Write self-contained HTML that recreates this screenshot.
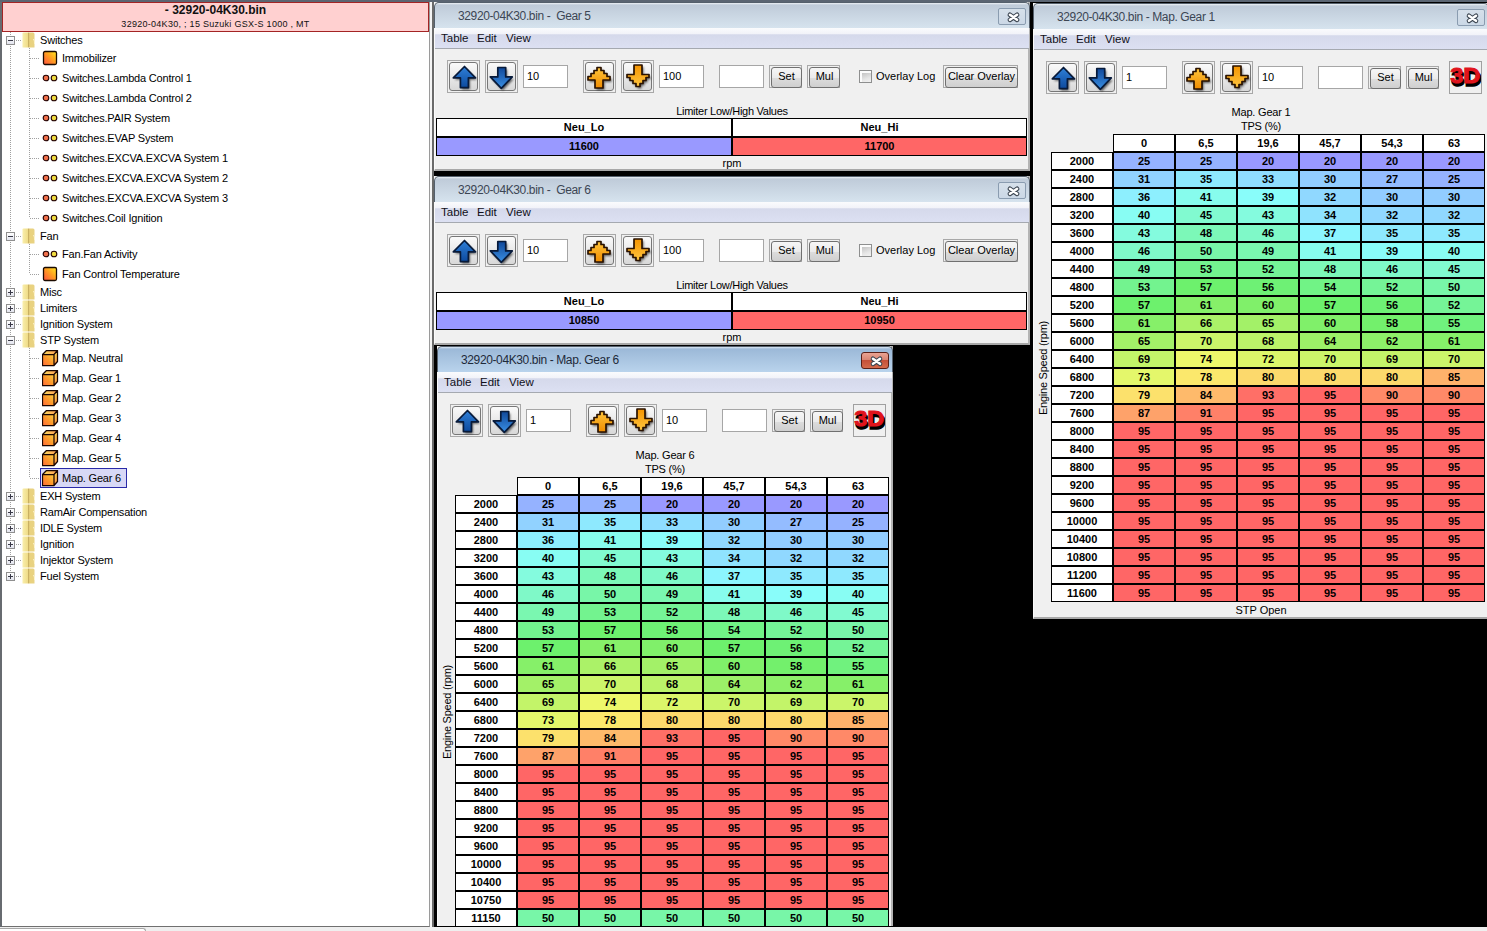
<!DOCTYPE html>
<html><head><meta charset="utf-8"><style>
html,body{margin:0;padding:0}
body{width:1487px;height:931px;position:relative;overflow:hidden;background:#000;font-family:"Liberation Sans", sans-serif;font-size:11px;color:#000}
div{position:absolute}
.t{white-space:nowrap}
#tree .t{letter-spacing:-0.19px;color:#000}
</style></head><body>
<div style="left:0;top:0;width:1487px;height:2px;background:#5b6572"></div>
<div style="left:0;top:2px;width:2px;height:925px;background:#676b70"></div>
<div style="left:2px;top:2px;width:427px;height:924px;background:#fff;border-right:1px solid #9a9a9a;border-bottom:1px solid #707070"></div>
<div style="left:430px;top:2px;width:2px;height:925px;background:#f4f4f4"></div>
<div style="left:432px;top:2px;width:2px;height:925px;background:#6a6a6a"></div>
<div style="left:0;top:927px;width:1487px;height:4px;background:#efefef"></div>
<div style="left:0;top:928px;width:145px;height:3px;background:#fff;border-top:1px solid #a8a8a8;border-right:1px solid #a8a8a8;border-radius:0 3px 0 0"></div>
<div style="left:2px;top:2px;width:427px;height:30px;box-sizing:border-box;border:1px solid #a32424;background:#ffd0d0"></div>
<div class="t" style="left:2px;top:4px;width:427px;text-align:center;font-weight:bold;font-size:12px;line-height:13px;color:#111">- 32920-04K30.bin</div>
<div class="t" style="left:2px;top:18px;width:427px;text-align:center;font-size:9px;letter-spacing:0.28px;line-height:12px;color:#111">32920-04K30, ; 15 Suzuki GSX-S 1000 , MT</div>
<div id="tree" style="left:0;top:0;width:430px;height:931px"><div style="left:10px;top:32px;width:1px;height:544px;background:repeating-linear-gradient(#a0a0a0 0 1px,transparent 1px 2px)"></div><div style="left:29px;top:48px;width:1px;height:170px;background:repeating-linear-gradient(#a0a0a0 0 1px,transparent 1px 2px)"></div><div style="left:29px;top:244px;width:1px;height:30px;background:repeating-linear-gradient(#a0a0a0 0 1px,transparent 1px 2px)"></div><div style="left:29px;top:348px;width:1px;height:130px;background:repeating-linear-gradient(#a0a0a0 0 1px,transparent 1px 2px)"></div><div style="left:16px;top:40px;width:6px;height:1px;background:repeating-linear-gradient(90deg,#a0a0a0 0 1px,transparent 1px 2px)"></div><div style="left:6px;top:36px;width:9px;height:9px;box-sizing:border-box;border:1px solid #8f8f8f;background:linear-gradient(#fff,#e2e4ee)"><div style="left:1px;top:3px;width:5px;height:1px;background:#3a3a48"></div></div><div style="left:22px;top:32px;width:14px;height:16px;"><svg width="14" height="16" viewBox="0 0 14 16"><defs><linearGradient id="fg" x1="0" y1="0" x2="1" y2="0"><stop offset="0" stop-color="#f9eeac"/><stop offset=".45" stop-color="#efdc88"/><stop offset=".5" stop-color="#c9b062"/><stop offset=".6" stop-color="#ead27e"/><stop offset="1" stop-color="#e8d283"/></linearGradient></defs><path d="M0.5 1.5 Q0.5 0.5 1.5 0.5 H11 Q12.5 0.5 12.5 2 V15.5 H0.5 Z" fill="url(#fg)"/><path d="M11.5 7 Q12.8 8.5 12.5 12" stroke="#fff6d0" stroke-width="1" fill="none"/></svg></div><div class="t" style="left:40px;top:32px;line-height:16px">Switches</div><div style="left:30px;top:58px;width:10px;height:1px;background:repeating-linear-gradient(90deg,#a0a0a0 0 1px,transparent 1px 2px)"></div><div style="left:42px;top:50px;width:17px;height:17px;"><svg width="16" height="16" viewBox="0 0 16 16"><defs><linearGradient id="sq" x1="0" y1="1" x2="1" y2="0"><stop offset="0" stop-color="#ff5040"/><stop offset=".55" stop-color="#ffa020"/><stop offset="1" stop-color="#ffe820"/></linearGradient></defs><rect x="1.5" y="1.5" width="13" height="13" rx="1.5" fill="url(#sq)" stroke="#1a0a00" stroke-width="1.3"/></svg></div><div class="t" style="left:62px;top:48px;line-height:20px">Immobilizer</div><div style="left:30px;top:78px;width:10px;height:1px;background:repeating-linear-gradient(90deg,#a0a0a0 0 1px,transparent 1px 2px)"></div><div style="left:42px;top:70px;width:17px;height:17px;"><svg width="16" height="16" viewBox="0 0 16 16"><circle cx="4" cy="8" r="2.8" fill="#f0704a" stroke="#200" stroke-width="1.1"/><circle cx="12" cy="8" r="2.8" fill="#f0dc40" stroke="#200" stroke-width="1.1"/></svg></div><div class="t" style="left:62px;top:68px;line-height:20px">Switches.Lambda Control 1</div><div style="left:30px;top:98px;width:10px;height:1px;background:repeating-linear-gradient(90deg,#a0a0a0 0 1px,transparent 1px 2px)"></div><div style="left:42px;top:90px;width:17px;height:17px;"><svg width="16" height="16" viewBox="0 0 16 16"><circle cx="4" cy="8" r="2.8" fill="#f0704a" stroke="#200" stroke-width="1.1"/><circle cx="12" cy="8" r="2.8" fill="#f0dc40" stroke="#200" stroke-width="1.1"/></svg></div><div class="t" style="left:62px;top:88px;line-height:20px">Switches.Lambda Control 2</div><div style="left:30px;top:118px;width:10px;height:1px;background:repeating-linear-gradient(90deg,#a0a0a0 0 1px,transparent 1px 2px)"></div><div style="left:42px;top:110px;width:17px;height:17px;"><svg width="16" height="16" viewBox="0 0 16 16"><circle cx="4" cy="8" r="2.8" fill="#f0704a" stroke="#200" stroke-width="1.1"/><circle cx="12" cy="8" r="2.8" fill="#f0dc40" stroke="#200" stroke-width="1.1"/></svg></div><div class="t" style="left:62px;top:108px;line-height:20px">Switches.PAIR System</div><div style="left:30px;top:138px;width:10px;height:1px;background:repeating-linear-gradient(90deg,#a0a0a0 0 1px,transparent 1px 2px)"></div><div style="left:42px;top:130px;width:17px;height:17px;"><svg width="16" height="16" viewBox="0 0 16 16"><circle cx="4" cy="8" r="2.8" fill="#f0704a" stroke="#200" stroke-width="1.1"/><circle cx="12" cy="8" r="2.8" fill="#f0dc40" stroke="#200" stroke-width="1.1"/></svg></div><div class="t" style="left:62px;top:128px;line-height:20px">Switches.EVAP System</div><div style="left:30px;top:158px;width:10px;height:1px;background:repeating-linear-gradient(90deg,#a0a0a0 0 1px,transparent 1px 2px)"></div><div style="left:42px;top:150px;width:17px;height:17px;"><svg width="16" height="16" viewBox="0 0 16 16"><circle cx="4" cy="8" r="2.8" fill="#f0704a" stroke="#200" stroke-width="1.1"/><circle cx="12" cy="8" r="2.8" fill="#f0dc40" stroke="#200" stroke-width="1.1"/></svg></div><div class="t" style="left:62px;top:148px;line-height:20px">Switches.EXCVA.EXCVA System 1</div><div style="left:30px;top:178px;width:10px;height:1px;background:repeating-linear-gradient(90deg,#a0a0a0 0 1px,transparent 1px 2px)"></div><div style="left:42px;top:170px;width:17px;height:17px;"><svg width="16" height="16" viewBox="0 0 16 16"><circle cx="4" cy="8" r="2.8" fill="#f0704a" stroke="#200" stroke-width="1.1"/><circle cx="12" cy="8" r="2.8" fill="#f0dc40" stroke="#200" stroke-width="1.1"/></svg></div><div class="t" style="left:62px;top:168px;line-height:20px">Switches.EXCVA.EXCVA System 2</div><div style="left:30px;top:198px;width:10px;height:1px;background:repeating-linear-gradient(90deg,#a0a0a0 0 1px,transparent 1px 2px)"></div><div style="left:42px;top:190px;width:17px;height:17px;"><svg width="16" height="16" viewBox="0 0 16 16"><circle cx="4" cy="8" r="2.8" fill="#f0704a" stroke="#200" stroke-width="1.1"/><circle cx="12" cy="8" r="2.8" fill="#f0dc40" stroke="#200" stroke-width="1.1"/></svg></div><div class="t" style="left:62px;top:188px;line-height:20px">Switches.EXCVA.EXCVA System 3</div><div style="left:30px;top:218px;width:10px;height:1px;background:repeating-linear-gradient(90deg,#a0a0a0 0 1px,transparent 1px 2px)"></div><div style="left:42px;top:210px;width:17px;height:17px;"><svg width="16" height="16" viewBox="0 0 16 16"><circle cx="4" cy="8" r="2.8" fill="#f0704a" stroke="#200" stroke-width="1.1"/><circle cx="12" cy="8" r="2.8" fill="#f0dc40" stroke="#200" stroke-width="1.1"/></svg></div><div class="t" style="left:62px;top:208px;line-height:20px">Switches.Coil Ignition</div><div style="left:16px;top:236px;width:6px;height:1px;background:repeating-linear-gradient(90deg,#a0a0a0 0 1px,transparent 1px 2px)"></div><div style="left:6px;top:232px;width:9px;height:9px;box-sizing:border-box;border:1px solid #8f8f8f;background:linear-gradient(#fff,#e2e4ee)"><div style="left:1px;top:3px;width:5px;height:1px;background:#3a3a48"></div></div><div style="left:22px;top:228px;width:14px;height:16px;"><svg width="14" height="16" viewBox="0 0 14 16"><defs><linearGradient id="fg" x1="0" y1="0" x2="1" y2="0"><stop offset="0" stop-color="#f9eeac"/><stop offset=".45" stop-color="#efdc88"/><stop offset=".5" stop-color="#c9b062"/><stop offset=".6" stop-color="#ead27e"/><stop offset="1" stop-color="#e8d283"/></linearGradient></defs><path d="M0.5 1.5 Q0.5 0.5 1.5 0.5 H11 Q12.5 0.5 12.5 2 V15.5 H0.5 Z" fill="url(#fg)"/><path d="M11.5 7 Q12.8 8.5 12.5 12" stroke="#fff6d0" stroke-width="1" fill="none"/></svg></div><div class="t" style="left:40px;top:228px;line-height:16px">Fan</div><div style="left:30px;top:254px;width:10px;height:1px;background:repeating-linear-gradient(90deg,#a0a0a0 0 1px,transparent 1px 2px)"></div><div style="left:42px;top:246px;width:17px;height:17px;"><svg width="16" height="16" viewBox="0 0 16 16"><circle cx="4" cy="8" r="2.8" fill="#f0704a" stroke="#200" stroke-width="1.1"/><circle cx="12" cy="8" r="2.8" fill="#f0dc40" stroke="#200" stroke-width="1.1"/></svg></div><div class="t" style="left:62px;top:244px;line-height:20px">Fan.Fan Activity</div><div style="left:30px;top:274px;width:10px;height:1px;background:repeating-linear-gradient(90deg,#a0a0a0 0 1px,transparent 1px 2px)"></div><div style="left:42px;top:266px;width:17px;height:17px;"><svg width="16" height="16" viewBox="0 0 16 16"><defs><linearGradient id="sq" x1="0" y1="1" x2="1" y2="0"><stop offset="0" stop-color="#ff5040"/><stop offset=".55" stop-color="#ffa020"/><stop offset="1" stop-color="#ffe820"/></linearGradient></defs><rect x="1.5" y="1.5" width="13" height="13" rx="1.5" fill="url(#sq)" stroke="#1a0a00" stroke-width="1.3"/></svg></div><div class="t" style="left:62px;top:264px;line-height:20px">Fan Control Temperature</div><div style="left:16px;top:292px;width:6px;height:1px;background:repeating-linear-gradient(90deg,#a0a0a0 0 1px,transparent 1px 2px)"></div><div style="left:6px;top:288px;width:9px;height:9px;box-sizing:border-box;border:1px solid #8f8f8f;background:linear-gradient(#fff,#e2e4ee)"><div style="left:1px;top:3px;width:5px;height:1px;background:#3a3a48"></div><div style="left:3px;top:1px;width:1px;height:5px;background:#3a3a48"></div></div><div style="left:22px;top:284px;width:14px;height:16px;"><svg width="14" height="16" viewBox="0 0 14 16"><defs><linearGradient id="fg" x1="0" y1="0" x2="1" y2="0"><stop offset="0" stop-color="#f9eeac"/><stop offset=".45" stop-color="#efdc88"/><stop offset=".5" stop-color="#c9b062"/><stop offset=".6" stop-color="#ead27e"/><stop offset="1" stop-color="#e8d283"/></linearGradient></defs><path d="M0.5 1.5 Q0.5 0.5 1.5 0.5 H11 Q12.5 0.5 12.5 2 V15.5 H0.5 Z" fill="url(#fg)"/><path d="M11.5 7 Q12.8 8.5 12.5 12" stroke="#fff6d0" stroke-width="1" fill="none"/></svg></div><div class="t" style="left:40px;top:284px;line-height:16px">Misc</div><div style="left:16px;top:308px;width:6px;height:1px;background:repeating-linear-gradient(90deg,#a0a0a0 0 1px,transparent 1px 2px)"></div><div style="left:6px;top:304px;width:9px;height:9px;box-sizing:border-box;border:1px solid #8f8f8f;background:linear-gradient(#fff,#e2e4ee)"><div style="left:1px;top:3px;width:5px;height:1px;background:#3a3a48"></div><div style="left:3px;top:1px;width:1px;height:5px;background:#3a3a48"></div></div><div style="left:22px;top:300px;width:14px;height:16px;"><svg width="14" height="16" viewBox="0 0 14 16"><defs><linearGradient id="fg" x1="0" y1="0" x2="1" y2="0"><stop offset="0" stop-color="#f9eeac"/><stop offset=".45" stop-color="#efdc88"/><stop offset=".5" stop-color="#c9b062"/><stop offset=".6" stop-color="#ead27e"/><stop offset="1" stop-color="#e8d283"/></linearGradient></defs><path d="M0.5 1.5 Q0.5 0.5 1.5 0.5 H11 Q12.5 0.5 12.5 2 V15.5 H0.5 Z" fill="url(#fg)"/><path d="M11.5 7 Q12.8 8.5 12.5 12" stroke="#fff6d0" stroke-width="1" fill="none"/></svg></div><div class="t" style="left:40px;top:300px;line-height:16px">Limiters</div><div style="left:16px;top:324px;width:6px;height:1px;background:repeating-linear-gradient(90deg,#a0a0a0 0 1px,transparent 1px 2px)"></div><div style="left:6px;top:320px;width:9px;height:9px;box-sizing:border-box;border:1px solid #8f8f8f;background:linear-gradient(#fff,#e2e4ee)"><div style="left:1px;top:3px;width:5px;height:1px;background:#3a3a48"></div><div style="left:3px;top:1px;width:1px;height:5px;background:#3a3a48"></div></div><div style="left:22px;top:316px;width:14px;height:16px;"><svg width="14" height="16" viewBox="0 0 14 16"><defs><linearGradient id="fg" x1="0" y1="0" x2="1" y2="0"><stop offset="0" stop-color="#f9eeac"/><stop offset=".45" stop-color="#efdc88"/><stop offset=".5" stop-color="#c9b062"/><stop offset=".6" stop-color="#ead27e"/><stop offset="1" stop-color="#e8d283"/></linearGradient></defs><path d="M0.5 1.5 Q0.5 0.5 1.5 0.5 H11 Q12.5 0.5 12.5 2 V15.5 H0.5 Z" fill="url(#fg)"/><path d="M11.5 7 Q12.8 8.5 12.5 12" stroke="#fff6d0" stroke-width="1" fill="none"/></svg></div><div class="t" style="left:40px;top:316px;line-height:16px">Ignition System</div><div style="left:16px;top:340px;width:6px;height:1px;background:repeating-linear-gradient(90deg,#a0a0a0 0 1px,transparent 1px 2px)"></div><div style="left:6px;top:336px;width:9px;height:9px;box-sizing:border-box;border:1px solid #8f8f8f;background:linear-gradient(#fff,#e2e4ee)"><div style="left:1px;top:3px;width:5px;height:1px;background:#3a3a48"></div></div><div style="left:22px;top:332px;width:14px;height:16px;"><svg width="14" height="16" viewBox="0 0 14 16"><defs><linearGradient id="fg" x1="0" y1="0" x2="1" y2="0"><stop offset="0" stop-color="#f9eeac"/><stop offset=".45" stop-color="#efdc88"/><stop offset=".5" stop-color="#c9b062"/><stop offset=".6" stop-color="#ead27e"/><stop offset="1" stop-color="#e8d283"/></linearGradient></defs><path d="M0.5 1.5 Q0.5 0.5 1.5 0.5 H11 Q12.5 0.5 12.5 2 V15.5 H0.5 Z" fill="url(#fg)"/><path d="M11.5 7 Q12.8 8.5 12.5 12" stroke="#fff6d0" stroke-width="1" fill="none"/></svg></div><div class="t" style="left:40px;top:332px;line-height:16px">STP System</div><div style="left:30px;top:358px;width:10px;height:1px;background:repeating-linear-gradient(90deg,#a0a0a0 0 1px,transparent 1px 2px)"></div><div style="left:42px;top:350px;width:17px;height:17px;"><svg width="17" height="17" viewBox="0 0 17 17"><defs><linearGradient id="cf" x1="0" y1="1" x2="1" y2="0"><stop offset="0" stop-color="#ff6a3a"/><stop offset=".5" stop-color="#ff9a2a"/><stop offset="1" stop-color="#ffd040"/></linearGradient><linearGradient id="ct" x1="0" y1="0" x2="1" y2="0"><stop offset="0" stop-color="#ffe060"/><stop offset="1" stop-color="#ff9a50"/></linearGradient><linearGradient id="cr" x1="0" y1="0" x2="0" y2="1"><stop offset="0" stop-color="#ffe050"/><stop offset="1" stop-color="#ff8a40"/></linearGradient></defs><path d="M0.5 4.5 L4.5 0.5 H15.5 L12 4.5 Z" fill="url(#ct)"/><path d="M12 4.5 L15.5 0.5 V11.5 L12 15.5 Z" fill="url(#cr)"/><path d="M0.5 4.5 H12 V15.5 H0.5 Z" fill="url(#cf)"/><path d="M0.5 4.5 L4.5 0.5 H15.5 V11.5 L12 15.5 H0.5 Z M0.5 4.5 H12 V15.5 M12 4.5 L15.5 0.5" fill="none" stroke="#1a0500" stroke-width="1.25" stroke-linejoin="round"/></svg></div><div class="t" style="left:62px;top:348px;line-height:20px">Map. Neutral</div><div style="left:30px;top:378px;width:10px;height:1px;background:repeating-linear-gradient(90deg,#a0a0a0 0 1px,transparent 1px 2px)"></div><div style="left:42px;top:370px;width:17px;height:17px;"><svg width="17" height="17" viewBox="0 0 17 17"><defs><linearGradient id="cf" x1="0" y1="1" x2="1" y2="0"><stop offset="0" stop-color="#ff6a3a"/><stop offset=".5" stop-color="#ff9a2a"/><stop offset="1" stop-color="#ffd040"/></linearGradient><linearGradient id="ct" x1="0" y1="0" x2="1" y2="0"><stop offset="0" stop-color="#ffe060"/><stop offset="1" stop-color="#ff9a50"/></linearGradient><linearGradient id="cr" x1="0" y1="0" x2="0" y2="1"><stop offset="0" stop-color="#ffe050"/><stop offset="1" stop-color="#ff8a40"/></linearGradient></defs><path d="M0.5 4.5 L4.5 0.5 H15.5 L12 4.5 Z" fill="url(#ct)"/><path d="M12 4.5 L15.5 0.5 V11.5 L12 15.5 Z" fill="url(#cr)"/><path d="M0.5 4.5 H12 V15.5 H0.5 Z" fill="url(#cf)"/><path d="M0.5 4.5 L4.5 0.5 H15.5 V11.5 L12 15.5 H0.5 Z M0.5 4.5 H12 V15.5 M12 4.5 L15.5 0.5" fill="none" stroke="#1a0500" stroke-width="1.25" stroke-linejoin="round"/></svg></div><div class="t" style="left:62px;top:368px;line-height:20px">Map. Gear 1</div><div style="left:30px;top:398px;width:10px;height:1px;background:repeating-linear-gradient(90deg,#a0a0a0 0 1px,transparent 1px 2px)"></div><div style="left:42px;top:390px;width:17px;height:17px;"><svg width="17" height="17" viewBox="0 0 17 17"><defs><linearGradient id="cf" x1="0" y1="1" x2="1" y2="0"><stop offset="0" stop-color="#ff6a3a"/><stop offset=".5" stop-color="#ff9a2a"/><stop offset="1" stop-color="#ffd040"/></linearGradient><linearGradient id="ct" x1="0" y1="0" x2="1" y2="0"><stop offset="0" stop-color="#ffe060"/><stop offset="1" stop-color="#ff9a50"/></linearGradient><linearGradient id="cr" x1="0" y1="0" x2="0" y2="1"><stop offset="0" stop-color="#ffe050"/><stop offset="1" stop-color="#ff8a40"/></linearGradient></defs><path d="M0.5 4.5 L4.5 0.5 H15.5 L12 4.5 Z" fill="url(#ct)"/><path d="M12 4.5 L15.5 0.5 V11.5 L12 15.5 Z" fill="url(#cr)"/><path d="M0.5 4.5 H12 V15.5 H0.5 Z" fill="url(#cf)"/><path d="M0.5 4.5 L4.5 0.5 H15.5 V11.5 L12 15.5 H0.5 Z M0.5 4.5 H12 V15.5 M12 4.5 L15.5 0.5" fill="none" stroke="#1a0500" stroke-width="1.25" stroke-linejoin="round"/></svg></div><div class="t" style="left:62px;top:388px;line-height:20px">Map. Gear 2</div><div style="left:30px;top:418px;width:10px;height:1px;background:repeating-linear-gradient(90deg,#a0a0a0 0 1px,transparent 1px 2px)"></div><div style="left:42px;top:410px;width:17px;height:17px;"><svg width="17" height="17" viewBox="0 0 17 17"><defs><linearGradient id="cf" x1="0" y1="1" x2="1" y2="0"><stop offset="0" stop-color="#ff6a3a"/><stop offset=".5" stop-color="#ff9a2a"/><stop offset="1" stop-color="#ffd040"/></linearGradient><linearGradient id="ct" x1="0" y1="0" x2="1" y2="0"><stop offset="0" stop-color="#ffe060"/><stop offset="1" stop-color="#ff9a50"/></linearGradient><linearGradient id="cr" x1="0" y1="0" x2="0" y2="1"><stop offset="0" stop-color="#ffe050"/><stop offset="1" stop-color="#ff8a40"/></linearGradient></defs><path d="M0.5 4.5 L4.5 0.5 H15.5 L12 4.5 Z" fill="url(#ct)"/><path d="M12 4.5 L15.5 0.5 V11.5 L12 15.5 Z" fill="url(#cr)"/><path d="M0.5 4.5 H12 V15.5 H0.5 Z" fill="url(#cf)"/><path d="M0.5 4.5 L4.5 0.5 H15.5 V11.5 L12 15.5 H0.5 Z M0.5 4.5 H12 V15.5 M12 4.5 L15.5 0.5" fill="none" stroke="#1a0500" stroke-width="1.25" stroke-linejoin="round"/></svg></div><div class="t" style="left:62px;top:408px;line-height:20px">Map. Gear 3</div><div style="left:30px;top:438px;width:10px;height:1px;background:repeating-linear-gradient(90deg,#a0a0a0 0 1px,transparent 1px 2px)"></div><div style="left:42px;top:430px;width:17px;height:17px;"><svg width="17" height="17" viewBox="0 0 17 17"><defs><linearGradient id="cf" x1="0" y1="1" x2="1" y2="0"><stop offset="0" stop-color="#ff6a3a"/><stop offset=".5" stop-color="#ff9a2a"/><stop offset="1" stop-color="#ffd040"/></linearGradient><linearGradient id="ct" x1="0" y1="0" x2="1" y2="0"><stop offset="0" stop-color="#ffe060"/><stop offset="1" stop-color="#ff9a50"/></linearGradient><linearGradient id="cr" x1="0" y1="0" x2="0" y2="1"><stop offset="0" stop-color="#ffe050"/><stop offset="1" stop-color="#ff8a40"/></linearGradient></defs><path d="M0.5 4.5 L4.5 0.5 H15.5 L12 4.5 Z" fill="url(#ct)"/><path d="M12 4.5 L15.5 0.5 V11.5 L12 15.5 Z" fill="url(#cr)"/><path d="M0.5 4.5 H12 V15.5 H0.5 Z" fill="url(#cf)"/><path d="M0.5 4.5 L4.5 0.5 H15.5 V11.5 L12 15.5 H0.5 Z M0.5 4.5 H12 V15.5 M12 4.5 L15.5 0.5" fill="none" stroke="#1a0500" stroke-width="1.25" stroke-linejoin="round"/></svg></div><div class="t" style="left:62px;top:428px;line-height:20px">Map. Gear 4</div><div style="left:30px;top:458px;width:10px;height:1px;background:repeating-linear-gradient(90deg,#a0a0a0 0 1px,transparent 1px 2px)"></div><div style="left:42px;top:450px;width:17px;height:17px;"><svg width="17" height="17" viewBox="0 0 17 17"><defs><linearGradient id="cf" x1="0" y1="1" x2="1" y2="0"><stop offset="0" stop-color="#ff6a3a"/><stop offset=".5" stop-color="#ff9a2a"/><stop offset="1" stop-color="#ffd040"/></linearGradient><linearGradient id="ct" x1="0" y1="0" x2="1" y2="0"><stop offset="0" stop-color="#ffe060"/><stop offset="1" stop-color="#ff9a50"/></linearGradient><linearGradient id="cr" x1="0" y1="0" x2="0" y2="1"><stop offset="0" stop-color="#ffe050"/><stop offset="1" stop-color="#ff8a40"/></linearGradient></defs><path d="M0.5 4.5 L4.5 0.5 H15.5 L12 4.5 Z" fill="url(#ct)"/><path d="M12 4.5 L15.5 0.5 V11.5 L12 15.5 Z" fill="url(#cr)"/><path d="M0.5 4.5 H12 V15.5 H0.5 Z" fill="url(#cf)"/><path d="M0.5 4.5 L4.5 0.5 H15.5 V11.5 L12 15.5 H0.5 Z M0.5 4.5 H12 V15.5 M12 4.5 L15.5 0.5" fill="none" stroke="#1a0500" stroke-width="1.25" stroke-linejoin="round"/></svg></div><div class="t" style="left:62px;top:448px;line-height:20px">Map. Gear 5</div><div style="left:30px;top:478px;width:10px;height:1px;background:repeating-linear-gradient(90deg,#a0a0a0 0 1px,transparent 1px 2px)"></div><div style="left:40px;top:468px;width:87px;height:20px;box-sizing:border-box;border:1px solid #2a2aa8;background:#d8d8f6"></div><div style="left:42px;top:470px;width:17px;height:17px;"><svg width="17" height="17" viewBox="0 0 17 17"><defs><linearGradient id="cf" x1="0" y1="1" x2="1" y2="0"><stop offset="0" stop-color="#ff6a3a"/><stop offset=".5" stop-color="#ff9a2a"/><stop offset="1" stop-color="#ffd040"/></linearGradient><linearGradient id="ct" x1="0" y1="0" x2="1" y2="0"><stop offset="0" stop-color="#ffe060"/><stop offset="1" stop-color="#ff9a50"/></linearGradient><linearGradient id="cr" x1="0" y1="0" x2="0" y2="1"><stop offset="0" stop-color="#ffe050"/><stop offset="1" stop-color="#ff8a40"/></linearGradient></defs><path d="M0.5 4.5 L4.5 0.5 H15.5 L12 4.5 Z" fill="url(#ct)"/><path d="M12 4.5 L15.5 0.5 V11.5 L12 15.5 Z" fill="url(#cr)"/><path d="M0.5 4.5 H12 V15.5 H0.5 Z" fill="url(#cf)"/><path d="M0.5 4.5 L4.5 0.5 H15.5 V11.5 L12 15.5 H0.5 Z M0.5 4.5 H12 V15.5 M12 4.5 L15.5 0.5" fill="none" stroke="#1a0500" stroke-width="1.25" stroke-linejoin="round"/></svg></div><div class="t" style="left:62px;top:468px;line-height:20px">Map. Gear 6</div><div style="left:16px;top:496px;width:6px;height:1px;background:repeating-linear-gradient(90deg,#a0a0a0 0 1px,transparent 1px 2px)"></div><div style="left:6px;top:492px;width:9px;height:9px;box-sizing:border-box;border:1px solid #8f8f8f;background:linear-gradient(#fff,#e2e4ee)"><div style="left:1px;top:3px;width:5px;height:1px;background:#3a3a48"></div><div style="left:3px;top:1px;width:1px;height:5px;background:#3a3a48"></div></div><div style="left:22px;top:488px;width:14px;height:16px;"><svg width="14" height="16" viewBox="0 0 14 16"><defs><linearGradient id="fg" x1="0" y1="0" x2="1" y2="0"><stop offset="0" stop-color="#f9eeac"/><stop offset=".45" stop-color="#efdc88"/><stop offset=".5" stop-color="#c9b062"/><stop offset=".6" stop-color="#ead27e"/><stop offset="1" stop-color="#e8d283"/></linearGradient></defs><path d="M0.5 1.5 Q0.5 0.5 1.5 0.5 H11 Q12.5 0.5 12.5 2 V15.5 H0.5 Z" fill="url(#fg)"/><path d="M11.5 7 Q12.8 8.5 12.5 12" stroke="#fff6d0" stroke-width="1" fill="none"/></svg></div><div class="t" style="left:40px;top:488px;line-height:16px">EXH System</div><div style="left:16px;top:512px;width:6px;height:1px;background:repeating-linear-gradient(90deg,#a0a0a0 0 1px,transparent 1px 2px)"></div><div style="left:6px;top:508px;width:9px;height:9px;box-sizing:border-box;border:1px solid #8f8f8f;background:linear-gradient(#fff,#e2e4ee)"><div style="left:1px;top:3px;width:5px;height:1px;background:#3a3a48"></div><div style="left:3px;top:1px;width:1px;height:5px;background:#3a3a48"></div></div><div style="left:22px;top:504px;width:14px;height:16px;"><svg width="14" height="16" viewBox="0 0 14 16"><defs><linearGradient id="fg" x1="0" y1="0" x2="1" y2="0"><stop offset="0" stop-color="#f9eeac"/><stop offset=".45" stop-color="#efdc88"/><stop offset=".5" stop-color="#c9b062"/><stop offset=".6" stop-color="#ead27e"/><stop offset="1" stop-color="#e8d283"/></linearGradient></defs><path d="M0.5 1.5 Q0.5 0.5 1.5 0.5 H11 Q12.5 0.5 12.5 2 V15.5 H0.5 Z" fill="url(#fg)"/><path d="M11.5 7 Q12.8 8.5 12.5 12" stroke="#fff6d0" stroke-width="1" fill="none"/></svg></div><div class="t" style="left:40px;top:504px;line-height:16px">RamAir Compensation</div><div style="left:16px;top:528px;width:6px;height:1px;background:repeating-linear-gradient(90deg,#a0a0a0 0 1px,transparent 1px 2px)"></div><div style="left:6px;top:524px;width:9px;height:9px;box-sizing:border-box;border:1px solid #8f8f8f;background:linear-gradient(#fff,#e2e4ee)"><div style="left:1px;top:3px;width:5px;height:1px;background:#3a3a48"></div><div style="left:3px;top:1px;width:1px;height:5px;background:#3a3a48"></div></div><div style="left:22px;top:520px;width:14px;height:16px;"><svg width="14" height="16" viewBox="0 0 14 16"><defs><linearGradient id="fg" x1="0" y1="0" x2="1" y2="0"><stop offset="0" stop-color="#f9eeac"/><stop offset=".45" stop-color="#efdc88"/><stop offset=".5" stop-color="#c9b062"/><stop offset=".6" stop-color="#ead27e"/><stop offset="1" stop-color="#e8d283"/></linearGradient></defs><path d="M0.5 1.5 Q0.5 0.5 1.5 0.5 H11 Q12.5 0.5 12.5 2 V15.5 H0.5 Z" fill="url(#fg)"/><path d="M11.5 7 Q12.8 8.5 12.5 12" stroke="#fff6d0" stroke-width="1" fill="none"/></svg></div><div class="t" style="left:40px;top:520px;line-height:16px">IDLE System</div><div style="left:16px;top:544px;width:6px;height:1px;background:repeating-linear-gradient(90deg,#a0a0a0 0 1px,transparent 1px 2px)"></div><div style="left:6px;top:540px;width:9px;height:9px;box-sizing:border-box;border:1px solid #8f8f8f;background:linear-gradient(#fff,#e2e4ee)"><div style="left:1px;top:3px;width:5px;height:1px;background:#3a3a48"></div><div style="left:3px;top:1px;width:1px;height:5px;background:#3a3a48"></div></div><div style="left:22px;top:536px;width:14px;height:16px;"><svg width="14" height="16" viewBox="0 0 14 16"><defs><linearGradient id="fg" x1="0" y1="0" x2="1" y2="0"><stop offset="0" stop-color="#f9eeac"/><stop offset=".45" stop-color="#efdc88"/><stop offset=".5" stop-color="#c9b062"/><stop offset=".6" stop-color="#ead27e"/><stop offset="1" stop-color="#e8d283"/></linearGradient></defs><path d="M0.5 1.5 Q0.5 0.5 1.5 0.5 H11 Q12.5 0.5 12.5 2 V15.5 H0.5 Z" fill="url(#fg)"/><path d="M11.5 7 Q12.8 8.5 12.5 12" stroke="#fff6d0" stroke-width="1" fill="none"/></svg></div><div class="t" style="left:40px;top:536px;line-height:16px">Ignition</div><div style="left:16px;top:560px;width:6px;height:1px;background:repeating-linear-gradient(90deg,#a0a0a0 0 1px,transparent 1px 2px)"></div><div style="left:6px;top:556px;width:9px;height:9px;box-sizing:border-box;border:1px solid #8f8f8f;background:linear-gradient(#fff,#e2e4ee)"><div style="left:1px;top:3px;width:5px;height:1px;background:#3a3a48"></div><div style="left:3px;top:1px;width:1px;height:5px;background:#3a3a48"></div></div><div style="left:22px;top:552px;width:14px;height:16px;"><svg width="14" height="16" viewBox="0 0 14 16"><defs><linearGradient id="fg" x1="0" y1="0" x2="1" y2="0"><stop offset="0" stop-color="#f9eeac"/><stop offset=".45" stop-color="#efdc88"/><stop offset=".5" stop-color="#c9b062"/><stop offset=".6" stop-color="#ead27e"/><stop offset="1" stop-color="#e8d283"/></linearGradient></defs><path d="M0.5 1.5 Q0.5 0.5 1.5 0.5 H11 Q12.5 0.5 12.5 2 V15.5 H0.5 Z" fill="url(#fg)"/><path d="M11.5 7 Q12.8 8.5 12.5 12" stroke="#fff6d0" stroke-width="1" fill="none"/></svg></div><div class="t" style="left:40px;top:552px;line-height:16px">Injektor System</div><div style="left:16px;top:576px;width:6px;height:1px;background:repeating-linear-gradient(90deg,#a0a0a0 0 1px,transparent 1px 2px)"></div><div style="left:6px;top:572px;width:9px;height:9px;box-sizing:border-box;border:1px solid #8f8f8f;background:linear-gradient(#fff,#e2e4ee)"><div style="left:1px;top:3px;width:5px;height:1px;background:#3a3a48"></div><div style="left:3px;top:1px;width:1px;height:5px;background:#3a3a48"></div></div><div style="left:22px;top:568px;width:14px;height:16px;"><svg width="14" height="16" viewBox="0 0 14 16"><defs><linearGradient id="fg" x1="0" y1="0" x2="1" y2="0"><stop offset="0" stop-color="#f9eeac"/><stop offset=".45" stop-color="#efdc88"/><stop offset=".5" stop-color="#c9b062"/><stop offset=".6" stop-color="#ead27e"/><stop offset="1" stop-color="#e8d283"/></linearGradient></defs><path d="M0.5 1.5 Q0.5 0.5 1.5 0.5 H11 Q12.5 0.5 12.5 2 V15.5 H0.5 Z" fill="url(#fg)"/><path d="M11.5 7 Q12.8 8.5 12.5 12" stroke="#fff6d0" stroke-width="1" fill="none"/></svg></div><div class="t" style="left:40px;top:568px;line-height:16px">Fuel System</div></div>
<div style="left:434px;top:2px;width:596px;height:169px;background:#f0f0f0;overflow:hidden;box-sizing:border-box;border-left:1px solid #fafafa;border-right:2px solid #b4b4b4;border-bottom:2px solid #a8a8a8"></div><div style="left:434px;top:2px;width:596px;height:26px;background:linear-gradient(#eef2f6 0,#bfcbd9 8%,#d6e3ee 100%);border-radius:5px 5px 0 0;box-sizing:border-box;border:1px solid #55606c;border-bottom:none"></div><div class="t" style="left:458px;top:9px;font-size:12px;color:#3c4654;white-space:pre;letter-spacing:-0.38px;line-height:15px">32920-04K30.bin -  Gear 5</div><div style="left:998px;top:8px;width:28px;height:17px;box-sizing:border-box;border:1px solid #8a9cb0;border-radius:2px;background:linear-gradient(#d6e0ea,#cbd8e6)"><svg width="28" height="17" viewBox="0 0 28 17" style="position:absolute;left:-1px;top:-1px"><path d="M12 6.8 L19 11.8 M19 6.8 L12 11.8" stroke="#3a4450" stroke-width="4.6" stroke-linecap="round"/><path d="M12 6.8 L19 11.8 M19 6.8 L12 11.8" stroke="#fff" stroke-width="2.6" stroke-linecap="round"/></svg></div><div style="left:435px;top:28px;width:594px;height:20px;background:linear-gradient(#fafbfd 0,#f2f3f9 28%,#d5d9eb 34%,#dce0f2 100%);border-bottom:1px solid #a5a9b0"></div><div class="t" style="left:441px;top:31px;font-size:11.5px;line-height:15px;color:#10101a">Table</div><div class="t" style="left:477px;top:31px;font-size:11.5px;line-height:15px;color:#10101a">Edit</div><div class="t" style="left:506px;top:31px;font-size:11.5px;line-height:15px;color:#10101a">View</div><div style="left:447px;top:60px;width:33px;height:33px;box-sizing:border-box;border:1px solid #a8a8a8"><div style="left:1px;top:1px;width:29px;height:29px;box-sizing:border-box;border:1px solid #777;border-radius:3px;background:linear-gradient(#fafafa,#e6e6e6 60%,#d8d8d8)"></div><svg width="33" height="33" viewBox="0 0 33 33" style="position:absolute;left:0;top:0"><defs><linearGradient id="gbu_447_60" x1="0" y1="0" x2="0" y2="1"><stop offset="0" stop-color="#2f80d8"/><stop offset="1" stop-color="#0d4a9e"/></linearGradient><filter id="fgbu_447_60" x="-20%" y="-20%" width="150%" height="150%"><feGaussianBlur stdDeviation="1.2"/></filter></defs><path d="M16.5 5.5 L27.5 16.8 H20.4 V26.6 H12.4 V16.8 H5.3 Z" fill="#000" opacity=".6" transform="translate(1.5,2)" filter="url(#fgbu_447_60)"/><path d="M16.5 5.5 L27.5 16.8 H20.4 V26.6 H12.4 V16.8 H5.3 Z" fill="url(#gbu_447_60)" stroke="#071a3a" stroke-width="1.7" stroke-linejoin="round"/></svg></div><div style="left:485px;top:60px;width:33px;height:33px;box-sizing:border-box;border:1px solid #a8a8a8"><div style="left:1px;top:1px;width:29px;height:29px;box-sizing:border-box;border:1px solid #777;border-radius:3px;background:linear-gradient(#fafafa,#e6e6e6 60%,#d8d8d8)"></div><svg width="33" height="33" viewBox="0 0 33 33" style="position:absolute;left:0;top:0"><defs><linearGradient id="gbd_485_60" x1="0" y1="0" x2="0" y2="1"><stop offset="0" stop-color="#10489a"/><stop offset="1" stop-color="#3a90e4"/></linearGradient><filter id="fgbd_485_60" x="-20%" y="-20%" width="150%" height="150%"><feGaussianBlur stdDeviation="1.2"/></filter></defs><path d="M11.8 6.5 H19.7 V15.9 H26.3 L15.3 27.4 L4.3 15.9 H11.8 Z" fill="#000" opacity=".6" transform="translate(1.5,2)" filter="url(#fgbd_485_60)"/><path d="M11.8 6.5 H19.7 V15.9 H26.3 L15.3 27.4 L4.3 15.9 H11.8 Z" fill="url(#gbd_485_60)" stroke="#071a3a" stroke-width="1.7" stroke-linejoin="round"/></svg></div><div style="left:523px;top:65px;width:45px;height:23px;box-sizing:border-box;border:1px solid #a6a6a6;background:#fff"><div class="t" style="left:3px;top:0;line-height:21px">10</div></div><div style="left:583px;top:60px;width:33px;height:33px;box-sizing:border-box;border:1px solid #a8a8a8"><div style="left:1px;top:1px;width:29px;height:29px;box-sizing:border-box;border:1px solid #777;border-radius:3px;background:linear-gradient(#fafafa,#e6e6e6 60%,#d8d8d8)"></div><svg width="33" height="33" viewBox="0 0 33 33" style="position:absolute;left:0;top:0"><defs><linearGradient id="gou_583_60" x1="0" y1="0" x2="0" y2="1"><stop offset="0" stop-color="#ffc43a"/><stop offset="1" stop-color="#f08c00"/></linearGradient><filter id="fgou_583_60" x="-20%" y="-20%" width="150%" height="150%"><feGaussianBlur stdDeviation="1.2"/></filter></defs><path d="M13 6.5h4v3h3v3h3v3h3v3.5h-7v8h-8v-8h-7v-3.5h3v-3h3v-3h3z" fill="#000" opacity=".6" transform="translate(1.5,2)" filter="url(#fgou_583_60)"/><path d="M13 6.5h4v3h3v3h3v3h3v3.5h-7v8h-8v-8h-7v-3.5h3v-3h3v-3h3z" fill="url(#gou_583_60)" stroke="#2a1200" stroke-width="1.7" stroke-linejoin="round"/></svg></div><div style="left:621px;top:60px;width:33px;height:33px;box-sizing:border-box;border:1px solid #a8a8a8"><div style="left:1px;top:1px;width:29px;height:29px;box-sizing:border-box;border:1px solid #777;border-radius:3px;background:linear-gradient(#fafafa,#e6e6e6 60%,#d8d8d8)"></div><svg width="33" height="33" viewBox="0 0 33 33" style="position:absolute;left:0;top:0"><defs><linearGradient id="god_621_60" x1="0" y1="0" x2="0" y2="1"><stop offset="0" stop-color="#f59400"/><stop offset="1" stop-color="#ffc640"/></linearGradient><filter id="fgod_621_60" x="-20%" y="-20%" width="150%" height="150%"><feGaussianBlur stdDeviation="1.2"/></filter></defs><path d="M12 4h8v9.5h7v3h-3v3h-3v3h-3v3h-4v-3h-3v-3h-3v-3h-3v-3h7z" fill="#000" opacity=".6" transform="translate(1.5,2)" filter="url(#fgod_621_60)"/><path d="M12 4h8v9.5h7v3h-3v3h-3v3h-3v3h-4v-3h-3v-3h-3v-3h-3v-3h7z" fill="url(#god_621_60)" stroke="#2a1200" stroke-width="1.7" stroke-linejoin="round"/></svg></div><div style="left:659px;top:65px;width:45px;height:23px;box-sizing:border-box;border:1px solid #a6a6a6;background:#fff"><div class="t" style="left:3px;top:0;line-height:21px">100</div></div><div style="left:719px;top:65px;width:45px;height:23px;box-sizing:border-box;border:1px solid #a6a6a6;background:#fff"><div class="t" style="left:3px;top:0;line-height:21px"></div></div><div style="left:769px;top:65px;width:33px;height:23px;box-sizing:border-box;border:1px solid #a8a8a8"><div style="left:1px;top:1px;width:31px;height:21px;box-sizing:border-box;border:1px solid #707070;border-radius:3px;background:linear-gradient(#f6f6f6 0,#ebebeb 50%,#dddddd 51%,#cfcfcf)"></div><div class="t" style="left:0;top:0;width:33px;text-align:center;line-height:21px">Set</div></div><div style="left:807px;top:65px;width:33px;height:23px;box-sizing:border-box;border:1px solid #a8a8a8"><div style="left:1px;top:1px;width:31px;height:21px;box-sizing:border-box;border:1px solid #707070;border-radius:3px;background:linear-gradient(#f6f6f6 0,#ebebeb 50%,#dddddd 51%,#cfcfcf)"></div><div class="t" style="left:0;top:0;width:33px;text-align:center;line-height:21px">Mul</div></div><div style="left:859px;top:70px;width:13px;height:13px;box-sizing:border-box;border:1px solid #8e8f8f;background:#fcfcfc"><div style="left:2px;top:2px;width:9px;height:9px;background:linear-gradient(160deg,#c4c4c4,#e6e6e6 60%,#f2f2f2)"></div></div><div class="t" style="left:876px;top:69px;line-height:15px">Overlay Log</div><div style="left:943px;top:65px;width:75px;height:23px;box-sizing:border-box;border:1px solid #a8a8a8"><div style="left:1px;top:1px;width:73px;height:21px;box-sizing:border-box;border:1px solid #707070;border-radius:3px;background:linear-gradient(#f6f6f6 0,#ebebeb 50%,#dddddd 51%,#cfcfcf)"></div><div class="t" style="left:0;top:0;width:75px;text-align:center;line-height:21px">Clear Overlay</div></div><div class="t" style="left:434px;top:104px;width:596px;text-align:center;letter-spacing:-0.27px;line-height:15px">Limiter Low/High Values</div><div style="left:436px;top:118px;width:296px;height:19px;box-sizing:border-box;border:1px solid #000;background:#fff;font-weight:bold;text-align:center;line-height:17px">Neu_Lo</div><div style="left:732px;top:118px;width:295px;height:19px;box-sizing:border-box;border:1px solid #000;background:#fff;font-weight:bold;text-align:center;line-height:17px">Neu_Hi</div><div style="left:436px;top:137px;width:296px;height:19px;box-sizing:border-box;border:1px solid #000;background:#9999ff;font-weight:bold;text-align:center;line-height:17px">11600</div><div style="left:732px;top:137px;width:295px;height:19px;box-sizing:border-box;border:1px solid #000;background:#ff6666;font-weight:bold;text-align:center;line-height:17px">11700</div><div class="t" style="left:434px;top:156px;width:596px;text-align:center;line-height:15px">rpm</div>
<div style="left:434px;top:176px;width:596px;height:169px;background:#f0f0f0;overflow:hidden;box-sizing:border-box;border-left:1px solid #fafafa;border-right:2px solid #b4b4b4;border-bottom:2px solid #a8a8a8"></div><div style="left:434px;top:176px;width:596px;height:26px;background:linear-gradient(#eef2f6 0,#bfcbd9 8%,#d6e3ee 100%);border-radius:5px 5px 0 0;box-sizing:border-box;border:1px solid #55606c;border-bottom:none"></div><div class="t" style="left:458px;top:183px;font-size:12px;color:#3c4654;white-space:pre;letter-spacing:-0.38px;line-height:15px">32920-04K30.bin -  Gear 6</div><div style="left:998px;top:182px;width:28px;height:17px;box-sizing:border-box;border:1px solid #8a9cb0;border-radius:2px;background:linear-gradient(#d6e0ea,#cbd8e6)"><svg width="28" height="17" viewBox="0 0 28 17" style="position:absolute;left:-1px;top:-1px"><path d="M12 6.8 L19 11.8 M19 6.8 L12 11.8" stroke="#3a4450" stroke-width="4.6" stroke-linecap="round"/><path d="M12 6.8 L19 11.8 M19 6.8 L12 11.8" stroke="#fff" stroke-width="2.6" stroke-linecap="round"/></svg></div><div style="left:435px;top:202px;width:594px;height:20px;background:linear-gradient(#fafbfd 0,#f2f3f9 28%,#d5d9eb 34%,#dce0f2 100%);border-bottom:1px solid #a5a9b0"></div><div class="t" style="left:441px;top:205px;font-size:11.5px;line-height:15px;color:#10101a">Table</div><div class="t" style="left:477px;top:205px;font-size:11.5px;line-height:15px;color:#10101a">Edit</div><div class="t" style="left:506px;top:205px;font-size:11.5px;line-height:15px;color:#10101a">View</div><div style="left:447px;top:234px;width:33px;height:33px;box-sizing:border-box;border:1px solid #a8a8a8"><div style="left:1px;top:1px;width:29px;height:29px;box-sizing:border-box;border:1px solid #777;border-radius:3px;background:linear-gradient(#fafafa,#e6e6e6 60%,#d8d8d8)"></div><svg width="33" height="33" viewBox="0 0 33 33" style="position:absolute;left:0;top:0"><defs><linearGradient id="gbu_447_234" x1="0" y1="0" x2="0" y2="1"><stop offset="0" stop-color="#2f80d8"/><stop offset="1" stop-color="#0d4a9e"/></linearGradient><filter id="fgbu_447_234" x="-20%" y="-20%" width="150%" height="150%"><feGaussianBlur stdDeviation="1.2"/></filter></defs><path d="M16.5 5.5 L27.5 16.8 H20.4 V26.6 H12.4 V16.8 H5.3 Z" fill="#000" opacity=".6" transform="translate(1.5,2)" filter="url(#fgbu_447_234)"/><path d="M16.5 5.5 L27.5 16.8 H20.4 V26.6 H12.4 V16.8 H5.3 Z" fill="url(#gbu_447_234)" stroke="#071a3a" stroke-width="1.7" stroke-linejoin="round"/></svg></div><div style="left:485px;top:234px;width:33px;height:33px;box-sizing:border-box;border:1px solid #a8a8a8"><div style="left:1px;top:1px;width:29px;height:29px;box-sizing:border-box;border:1px solid #777;border-radius:3px;background:linear-gradient(#fafafa,#e6e6e6 60%,#d8d8d8)"></div><svg width="33" height="33" viewBox="0 0 33 33" style="position:absolute;left:0;top:0"><defs><linearGradient id="gbd_485_234" x1="0" y1="0" x2="0" y2="1"><stop offset="0" stop-color="#10489a"/><stop offset="1" stop-color="#3a90e4"/></linearGradient><filter id="fgbd_485_234" x="-20%" y="-20%" width="150%" height="150%"><feGaussianBlur stdDeviation="1.2"/></filter></defs><path d="M11.8 6.5 H19.7 V15.9 H26.3 L15.3 27.4 L4.3 15.9 H11.8 Z" fill="#000" opacity=".6" transform="translate(1.5,2)" filter="url(#fgbd_485_234)"/><path d="M11.8 6.5 H19.7 V15.9 H26.3 L15.3 27.4 L4.3 15.9 H11.8 Z" fill="url(#gbd_485_234)" stroke="#071a3a" stroke-width="1.7" stroke-linejoin="round"/></svg></div><div style="left:523px;top:239px;width:45px;height:23px;box-sizing:border-box;border:1px solid #a6a6a6;background:#fff"><div class="t" style="left:3px;top:0;line-height:21px">10</div></div><div style="left:583px;top:234px;width:33px;height:33px;box-sizing:border-box;border:1px solid #a8a8a8"><div style="left:1px;top:1px;width:29px;height:29px;box-sizing:border-box;border:1px solid #777;border-radius:3px;background:linear-gradient(#fafafa,#e6e6e6 60%,#d8d8d8)"></div><svg width="33" height="33" viewBox="0 0 33 33" style="position:absolute;left:0;top:0"><defs><linearGradient id="gou_583_234" x1="0" y1="0" x2="0" y2="1"><stop offset="0" stop-color="#ffc43a"/><stop offset="1" stop-color="#f08c00"/></linearGradient><filter id="fgou_583_234" x="-20%" y="-20%" width="150%" height="150%"><feGaussianBlur stdDeviation="1.2"/></filter></defs><path d="M13 6.5h4v3h3v3h3v3h3v3.5h-7v8h-8v-8h-7v-3.5h3v-3h3v-3h3z" fill="#000" opacity=".6" transform="translate(1.5,2)" filter="url(#fgou_583_234)"/><path d="M13 6.5h4v3h3v3h3v3h3v3.5h-7v8h-8v-8h-7v-3.5h3v-3h3v-3h3z" fill="url(#gou_583_234)" stroke="#2a1200" stroke-width="1.7" stroke-linejoin="round"/></svg></div><div style="left:621px;top:234px;width:33px;height:33px;box-sizing:border-box;border:1px solid #a8a8a8"><div style="left:1px;top:1px;width:29px;height:29px;box-sizing:border-box;border:1px solid #777;border-radius:3px;background:linear-gradient(#fafafa,#e6e6e6 60%,#d8d8d8)"></div><svg width="33" height="33" viewBox="0 0 33 33" style="position:absolute;left:0;top:0"><defs><linearGradient id="god_621_234" x1="0" y1="0" x2="0" y2="1"><stop offset="0" stop-color="#f59400"/><stop offset="1" stop-color="#ffc640"/></linearGradient><filter id="fgod_621_234" x="-20%" y="-20%" width="150%" height="150%"><feGaussianBlur stdDeviation="1.2"/></filter></defs><path d="M12 4h8v9.5h7v3h-3v3h-3v3h-3v3h-4v-3h-3v-3h-3v-3h-3v-3h7z" fill="#000" opacity=".6" transform="translate(1.5,2)" filter="url(#fgod_621_234)"/><path d="M12 4h8v9.5h7v3h-3v3h-3v3h-3v3h-4v-3h-3v-3h-3v-3h-3v-3h7z" fill="url(#god_621_234)" stroke="#2a1200" stroke-width="1.7" stroke-linejoin="round"/></svg></div><div style="left:659px;top:239px;width:45px;height:23px;box-sizing:border-box;border:1px solid #a6a6a6;background:#fff"><div class="t" style="left:3px;top:0;line-height:21px">100</div></div><div style="left:719px;top:239px;width:45px;height:23px;box-sizing:border-box;border:1px solid #a6a6a6;background:#fff"><div class="t" style="left:3px;top:0;line-height:21px"></div></div><div style="left:769px;top:239px;width:33px;height:23px;box-sizing:border-box;border:1px solid #a8a8a8"><div style="left:1px;top:1px;width:31px;height:21px;box-sizing:border-box;border:1px solid #707070;border-radius:3px;background:linear-gradient(#f6f6f6 0,#ebebeb 50%,#dddddd 51%,#cfcfcf)"></div><div class="t" style="left:0;top:0;width:33px;text-align:center;line-height:21px">Set</div></div><div style="left:807px;top:239px;width:33px;height:23px;box-sizing:border-box;border:1px solid #a8a8a8"><div style="left:1px;top:1px;width:31px;height:21px;box-sizing:border-box;border:1px solid #707070;border-radius:3px;background:linear-gradient(#f6f6f6 0,#ebebeb 50%,#dddddd 51%,#cfcfcf)"></div><div class="t" style="left:0;top:0;width:33px;text-align:center;line-height:21px">Mul</div></div><div style="left:859px;top:244px;width:13px;height:13px;box-sizing:border-box;border:1px solid #8e8f8f;background:#fcfcfc"><div style="left:2px;top:2px;width:9px;height:9px;background:linear-gradient(160deg,#c4c4c4,#e6e6e6 60%,#f2f2f2)"></div></div><div class="t" style="left:876px;top:243px;line-height:15px">Overlay Log</div><div style="left:943px;top:239px;width:75px;height:23px;box-sizing:border-box;border:1px solid #a8a8a8"><div style="left:1px;top:1px;width:73px;height:21px;box-sizing:border-box;border:1px solid #707070;border-radius:3px;background:linear-gradient(#f6f6f6 0,#ebebeb 50%,#dddddd 51%,#cfcfcf)"></div><div class="t" style="left:0;top:0;width:75px;text-align:center;line-height:21px">Clear Overlay</div></div><div class="t" style="left:434px;top:278px;width:596px;text-align:center;letter-spacing:-0.27px;line-height:15px">Limiter Low/High Values</div><div style="left:436px;top:292px;width:296px;height:19px;box-sizing:border-box;border:1px solid #000;background:#fff;font-weight:bold;text-align:center;line-height:17px">Neu_Lo</div><div style="left:732px;top:292px;width:295px;height:19px;box-sizing:border-box;border:1px solid #000;background:#fff;font-weight:bold;text-align:center;line-height:17px">Neu_Hi</div><div style="left:436px;top:311px;width:296px;height:19px;box-sizing:border-box;border:1px solid #000;background:#9999ff;font-weight:bold;text-align:center;line-height:17px">10850</div><div style="left:732px;top:311px;width:295px;height:19px;box-sizing:border-box;border:1px solid #000;background:#ff6666;font-weight:bold;text-align:center;line-height:17px">10950</div><div class="t" style="left:434px;top:330px;width:596px;text-align:center;line-height:15px">rpm</div>
<div style="left:1033px;top:0;width:454px;height:931px;overflow:hidden"><div style="left:0px;top:3px;width:456px;height:616px;background:#f0f0f0;overflow:hidden;box-sizing:border-box;border-left:1px solid #fafafa;border-right:2px solid #b4b4b4;border-bottom:2px solid #a8a8a8"></div><div style="left:0px;top:3px;width:456px;height:26px;background:linear-gradient(#eef2f6 0,#bfcbd9 8%,#d6e3ee 100%);border-radius:5px 5px 0 0;box-sizing:border-box;border:1px solid #55606c;border-bottom:none"></div><div class="t" style="left:24px;top:10px;font-size:12px;color:#3c4654;white-space:pre;letter-spacing:-0.38px;line-height:15px">32920-04K30.bin - Map. Gear 1</div><div style="left:424px;top:9px;width:28px;height:17px;box-sizing:border-box;border:1px solid #8a9cb0;border-radius:2px;background:linear-gradient(#d6e0ea,#cbd8e6)"><svg width="28" height="17" viewBox="0 0 28 17" style="position:absolute;left:-1px;top:-1px"><path d="M12 6.8 L19 11.8 M19 6.8 L12 11.8" stroke="#3a4450" stroke-width="4.6" stroke-linecap="round"/><path d="M12 6.8 L19 11.8 M19 6.8 L12 11.8" stroke="#fff" stroke-width="2.6" stroke-linecap="round"/></svg></div><div style="left:1px;top:29px;width:454px;height:20px;background:linear-gradient(#fafbfd 0,#f2f3f9 28%,#d5d9eb 34%,#dce0f2 100%);border-bottom:1px solid #a5a9b0"></div><div class="t" style="left:7px;top:32px;font-size:11.5px;line-height:15px;color:#10101a">Table</div><div class="t" style="left:43px;top:32px;font-size:11.5px;line-height:15px;color:#10101a">Edit</div><div class="t" style="left:72px;top:32px;font-size:11.5px;line-height:15px;color:#10101a">View</div><div style="left:13px;top:61px;width:33px;height:33px;box-sizing:border-box;border:1px solid #a8a8a8"><div style="left:1px;top:1px;width:29px;height:29px;box-sizing:border-box;border:1px solid #777;border-radius:3px;background:linear-gradient(#fafafa,#e6e6e6 60%,#d8d8d8)"></div><svg width="33" height="33" viewBox="0 0 33 33" style="position:absolute;left:0;top:0"><defs><linearGradient id="gbu_13_61" x1="0" y1="0" x2="0" y2="1"><stop offset="0" stop-color="#2f80d8"/><stop offset="1" stop-color="#0d4a9e"/></linearGradient><filter id="fgbu_13_61" x="-20%" y="-20%" width="150%" height="150%"><feGaussianBlur stdDeviation="1.2"/></filter></defs><path d="M16.5 5.5 L27.5 16.8 H20.4 V26.6 H12.4 V16.8 H5.3 Z" fill="#000" opacity=".6" transform="translate(1.5,2)" filter="url(#fgbu_13_61)"/><path d="M16.5 5.5 L27.5 16.8 H20.4 V26.6 H12.4 V16.8 H5.3 Z" fill="url(#gbu_13_61)" stroke="#071a3a" stroke-width="1.7" stroke-linejoin="round"/></svg></div><div style="left:51px;top:61px;width:33px;height:33px;box-sizing:border-box;border:1px solid #a8a8a8"><div style="left:1px;top:1px;width:29px;height:29px;box-sizing:border-box;border:1px solid #777;border-radius:3px;background:linear-gradient(#fafafa,#e6e6e6 60%,#d8d8d8)"></div><svg width="33" height="33" viewBox="0 0 33 33" style="position:absolute;left:0;top:0"><defs><linearGradient id="gbd_51_61" x1="0" y1="0" x2="0" y2="1"><stop offset="0" stop-color="#10489a"/><stop offset="1" stop-color="#3a90e4"/></linearGradient><filter id="fgbd_51_61" x="-20%" y="-20%" width="150%" height="150%"><feGaussianBlur stdDeviation="1.2"/></filter></defs><path d="M11.8 6.5 H19.7 V15.9 H26.3 L15.3 27.4 L4.3 15.9 H11.8 Z" fill="#000" opacity=".6" transform="translate(1.5,2)" filter="url(#fgbd_51_61)"/><path d="M11.8 6.5 H19.7 V15.9 H26.3 L15.3 27.4 L4.3 15.9 H11.8 Z" fill="url(#gbd_51_61)" stroke="#071a3a" stroke-width="1.7" stroke-linejoin="round"/></svg></div><div style="left:89px;top:66px;width:45px;height:23px;box-sizing:border-box;border:1px solid #a6a6a6;background:#fff"><div class="t" style="left:3px;top:0;line-height:21px">1</div></div><div style="left:149px;top:61px;width:33px;height:33px;box-sizing:border-box;border:1px solid #a8a8a8"><div style="left:1px;top:1px;width:29px;height:29px;box-sizing:border-box;border:1px solid #777;border-radius:3px;background:linear-gradient(#fafafa,#e6e6e6 60%,#d8d8d8)"></div><svg width="33" height="33" viewBox="0 0 33 33" style="position:absolute;left:0;top:0"><defs><linearGradient id="gou_149_61" x1="0" y1="0" x2="0" y2="1"><stop offset="0" stop-color="#ffc43a"/><stop offset="1" stop-color="#f08c00"/></linearGradient><filter id="fgou_149_61" x="-20%" y="-20%" width="150%" height="150%"><feGaussianBlur stdDeviation="1.2"/></filter></defs><path d="M13 6.5h4v3h3v3h3v3h3v3.5h-7v8h-8v-8h-7v-3.5h3v-3h3v-3h3z" fill="#000" opacity=".6" transform="translate(1.5,2)" filter="url(#fgou_149_61)"/><path d="M13 6.5h4v3h3v3h3v3h3v3.5h-7v8h-8v-8h-7v-3.5h3v-3h3v-3h3z" fill="url(#gou_149_61)" stroke="#2a1200" stroke-width="1.7" stroke-linejoin="round"/></svg></div><div style="left:187px;top:61px;width:33px;height:33px;box-sizing:border-box;border:1px solid #a8a8a8"><div style="left:1px;top:1px;width:29px;height:29px;box-sizing:border-box;border:1px solid #777;border-radius:3px;background:linear-gradient(#fafafa,#e6e6e6 60%,#d8d8d8)"></div><svg width="33" height="33" viewBox="0 0 33 33" style="position:absolute;left:0;top:0"><defs><linearGradient id="god_187_61" x1="0" y1="0" x2="0" y2="1"><stop offset="0" stop-color="#f59400"/><stop offset="1" stop-color="#ffc640"/></linearGradient><filter id="fgod_187_61" x="-20%" y="-20%" width="150%" height="150%"><feGaussianBlur stdDeviation="1.2"/></filter></defs><path d="M12 4h8v9.5h7v3h-3v3h-3v3h-3v3h-4v-3h-3v-3h-3v-3h-3v-3h7z" fill="#000" opacity=".6" transform="translate(1.5,2)" filter="url(#fgod_187_61)"/><path d="M12 4h8v9.5h7v3h-3v3h-3v3h-3v3h-4v-3h-3v-3h-3v-3h-3v-3h7z" fill="url(#god_187_61)" stroke="#2a1200" stroke-width="1.7" stroke-linejoin="round"/></svg></div><div style="left:225px;top:66px;width:45px;height:23px;box-sizing:border-box;border:1px solid #a6a6a6;background:#fff"><div class="t" style="left:3px;top:0;line-height:21px">10</div></div><div style="left:285px;top:66px;width:45px;height:23px;box-sizing:border-box;border:1px solid #a6a6a6;background:#fff"><div class="t" style="left:3px;top:0;line-height:21px"></div></div><div style="left:335px;top:66px;width:33px;height:23px;box-sizing:border-box;border:1px solid #a8a8a8"><div style="left:1px;top:1px;width:31px;height:21px;box-sizing:border-box;border:1px solid #707070;border-radius:3px;background:linear-gradient(#f6f6f6 0,#ebebeb 50%,#dddddd 51%,#cfcfcf)"></div><div class="t" style="left:0;top:0;width:33px;text-align:center;line-height:21px">Set</div></div><div style="left:373px;top:66px;width:33px;height:23px;box-sizing:border-box;border:1px solid #a8a8a8"><div style="left:1px;top:1px;width:31px;height:21px;box-sizing:border-box;border:1px solid #707070;border-radius:3px;background:linear-gradient(#f6f6f6 0,#ebebeb 50%,#dddddd 51%,#cfcfcf)"></div><div class="t" style="left:0;top:0;width:33px;text-align:center;line-height:21px">Mul</div></div><div style="left:416px;top:61px;width:33px;height:33px;box-sizing:border-box;border:1px solid #a0a0a0;overflow:hidden"><svg width="33" height="33" viewBox="0 0 33 33" style="position:absolute;left:-1px;top:-1px"><text x="2.6" y="24.6" font-family="Liberation Sans" font-weight="bold" font-size="22" textLength="30" lengthAdjust="spacingAndGlyphs" fill="#000" stroke="#000" stroke-width="1.4">3D</text><text x="1.2" y="22.4" font-family="Liberation Sans" font-weight="bold" font-size="22" textLength="30" lengthAdjust="spacingAndGlyphs" fill="#e0141c" stroke="#e0141c" stroke-width=".9">3D</text></svg></div><div class="t" style="left:0px;top:105px;width:456px;text-align:center;line-height:14px;letter-spacing:-0.2px">Map. Gear 1</div><div class="t" style="left:0px;top:119px;width:456px;text-align:center;line-height:14px;letter-spacing:-0.2px">TPS (%)</div><div style="left:80px;top:134px;width:62px;height:18px;box-sizing:border-box;border:1px solid #000;background:#fff;text-align:center;line-height:16px;font-weight:bold">0</div><div style="left:142px;top:134px;width:62px;height:18px;box-sizing:border-box;border:1px solid #000;background:#fff;text-align:center;line-height:16px;font-weight:bold">6,5</div><div style="left:204px;top:134px;width:62px;height:18px;box-sizing:border-box;border:1px solid #000;background:#fff;text-align:center;line-height:16px;font-weight:bold">19,6</div><div style="left:266px;top:134px;width:62px;height:18px;box-sizing:border-box;border:1px solid #000;background:#fff;text-align:center;line-height:16px;font-weight:bold">45,7</div><div style="left:328px;top:134px;width:62px;height:18px;box-sizing:border-box;border:1px solid #000;background:#fff;text-align:center;line-height:16px;font-weight:bold">54,3</div><div style="left:390px;top:134px;width:62px;height:18px;box-sizing:border-box;border:1px solid #000;background:#fff;text-align:center;line-height:16px;font-weight:bold">63</div><div style="left:18px;top:152px;width:62px;height:18px;box-sizing:border-box;border:1px solid #000;background:#fff;text-align:center;line-height:16px;font-weight:bold">2000</div><div style="left:80px;top:152px;width:62px;height:18px;box-sizing:border-box;border:1px solid #000;background:#95b2ff;text-align:center;line-height:16px;font-weight:bold">25</div><div style="left:142px;top:152px;width:62px;height:18px;box-sizing:border-box;border:1px solid #000;background:#95b2ff;text-align:center;line-height:16px;font-weight:bold">25</div><div style="left:204px;top:152px;width:62px;height:18px;box-sizing:border-box;border:1px solid #000;background:#9999ff;text-align:center;line-height:16px;font-weight:bold">20</div><div style="left:266px;top:152px;width:62px;height:18px;box-sizing:border-box;border:1px solid #000;background:#9999ff;text-align:center;line-height:16px;font-weight:bold">20</div><div style="left:328px;top:152px;width:62px;height:18px;box-sizing:border-box;border:1px solid #000;background:#9999ff;text-align:center;line-height:16px;font-weight:bold">20</div><div style="left:390px;top:152px;width:62px;height:18px;box-sizing:border-box;border:1px solid #000;background:#9999ff;text-align:center;line-height:16px;font-weight:bold">20</div><div style="left:18px;top:170px;width:62px;height:18px;box-sizing:border-box;border:1px solid #000;background:#fff;text-align:center;line-height:16px;font-weight:bold">2400</div><div style="left:80px;top:170px;width:62px;height:18px;box-sizing:border-box;border:1px solid #000;background:#91d2ff;text-align:center;line-height:16px;font-weight:bold">31</div><div style="left:142px;top:170px;width:62px;height:18px;box-sizing:border-box;border:1px solid #000;background:#8ee9fe;text-align:center;line-height:16px;font-weight:bold">35</div><div style="left:204px;top:170px;width:62px;height:18px;box-sizing:border-box;border:1px solid #000;background:#8fddff;text-align:center;line-height:16px;font-weight:bold">33</div><div style="left:266px;top:170px;width:62px;height:18px;box-sizing:border-box;border:1px solid #000;background:#92cdff;text-align:center;line-height:16px;font-weight:bold">30</div><div style="left:328px;top:170px;width:62px;height:18px;box-sizing:border-box;border:1px solid #000;background:#94bcff;text-align:center;line-height:16px;font-weight:bold">27</div><div style="left:390px;top:170px;width:62px;height:18px;box-sizing:border-box;border:1px solid #000;background:#95b2ff;text-align:center;line-height:16px;font-weight:bold">25</div><div style="left:18px;top:188px;width:62px;height:18px;box-sizing:border-box;border:1px solid #000;background:#fff;text-align:center;line-height:16px;font-weight:bold">2800</div><div style="left:80px;top:188px;width:62px;height:18px;box-sizing:border-box;border:1px solid #000;background:#8deffe;text-align:center;line-height:16px;font-weight:bold">36</div><div style="left:142px;top:188px;width:62px;height:18px;box-sizing:border-box;border:1px solid #000;background:#87fced;text-align:center;line-height:16px;font-weight:bold">41</div><div style="left:204px;top:188px;width:62px;height:18px;box-sizing:border-box;border:1px solid #000;background:#89fdfa;text-align:center;line-height:16px;font-weight:bold">39</div><div style="left:266px;top:188px;width:62px;height:18px;box-sizing:border-box;border:1px solid #000;background:#90d8ff;text-align:center;line-height:16px;font-weight:bold">32</div><div style="left:328px;top:188px;width:62px;height:18px;box-sizing:border-box;border:1px solid #000;background:#92cdff;text-align:center;line-height:16px;font-weight:bold">30</div><div style="left:390px;top:188px;width:62px;height:18px;box-sizing:border-box;border:1px solid #000;background:#92cdff;text-align:center;line-height:16px;font-weight:bold">30</div><div style="left:18px;top:206px;width:62px;height:18px;box-sizing:border-box;border:1px solid #000;background:#fff;text-align:center;line-height:16px;font-weight:bold">3200</div><div style="left:80px;top:206px;width:62px;height:18px;box-sizing:border-box;border:1px solid #000;background:#88fdf3;text-align:center;line-height:16px;font-weight:bold">40</div><div style="left:142px;top:206px;width:62px;height:18px;box-sizing:border-box;border:1px solid #000;background:#81fad0;text-align:center;line-height:16px;font-weight:bold">45</div><div style="left:204px;top:206px;width:62px;height:18px;box-sizing:border-box;border:1px solid #000;background:#84fbde;text-align:center;line-height:16px;font-weight:bold">43</div><div style="left:266px;top:206px;width:62px;height:18px;box-sizing:border-box;border:1px solid #000;background:#8fe3fe;text-align:center;line-height:16px;font-weight:bold">34</div><div style="left:328px;top:206px;width:62px;height:18px;box-sizing:border-box;border:1px solid #000;background:#90d8ff;text-align:center;line-height:16px;font-weight:bold">32</div><div style="left:390px;top:206px;width:62px;height:18px;box-sizing:border-box;border:1px solid #000;background:#90d8ff;text-align:center;line-height:16px;font-weight:bold">32</div><div style="left:18px;top:224px;width:62px;height:18px;box-sizing:border-box;border:1px solid #000;background:#fff;text-align:center;line-height:16px;font-weight:bold">3600</div><div style="left:80px;top:224px;width:62px;height:18px;box-sizing:border-box;border:1px solid #000;background:#84fbde;text-align:center;line-height:16px;font-weight:bold">43</div><div style="left:142px;top:224px;width:62px;height:18px;box-sizing:border-box;border:1px solid #000;background:#7cf8b8;text-align:center;line-height:16px;font-weight:bold">48</div><div style="left:204px;top:224px;width:62px;height:18px;box-sizing:border-box;border:1px solid #000;background:#7ff9c8;text-align:center;line-height:16px;font-weight:bold">46</div><div style="left:266px;top:224px;width:62px;height:18px;box-sizing:border-box;border:1px solid #000;background:#8cf5fe;text-align:center;line-height:16px;font-weight:bold">37</div><div style="left:328px;top:224px;width:62px;height:18px;box-sizing:border-box;border:1px solid #000;background:#8ee9fe;text-align:center;line-height:16px;font-weight:bold">35</div><div style="left:390px;top:224px;width:62px;height:18px;box-sizing:border-box;border:1px solid #000;background:#8ee9fe;text-align:center;line-height:16px;font-weight:bold">35</div><div style="left:18px;top:242px;width:62px;height:18px;box-sizing:border-box;border:1px solid #000;background:#fff;text-align:center;line-height:16px;font-weight:bold">4000</div><div style="left:80px;top:242px;width:62px;height:18px;box-sizing:border-box;border:1px solid #000;background:#7ff9c8;text-align:center;line-height:16px;font-weight:bold">46</div><div style="left:142px;top:242px;width:62px;height:18px;box-sizing:border-box;border:1px solid #000;background:#78f6a8;text-align:center;line-height:16px;font-weight:bold">50</div><div style="left:204px;top:242px;width:62px;height:18px;box-sizing:border-box;border:1px solid #000;background:#7af7b0;text-align:center;line-height:16px;font-weight:bold">49</div><div style="left:266px;top:242px;width:62px;height:18px;box-sizing:border-box;border:1px solid #000;background:#87fced;text-align:center;line-height:16px;font-weight:bold">41</div><div style="left:328px;top:242px;width:62px;height:18px;box-sizing:border-box;border:1px solid #000;background:#89fdfa;text-align:center;line-height:16px;font-weight:bold">39</div><div style="left:390px;top:242px;width:62px;height:18px;box-sizing:border-box;border:1px solid #000;background:#88fdf3;text-align:center;line-height:16px;font-weight:bold">40</div><div style="left:18px;top:260px;width:62px;height:18px;box-sizing:border-box;border:1px solid #000;background:#fff;text-align:center;line-height:16px;font-weight:bold">4400</div><div style="left:80px;top:260px;width:62px;height:18px;box-sizing:border-box;border:1px solid #000;background:#7af7b0;text-align:center;line-height:16px;font-weight:bold">49</div><div style="left:142px;top:260px;width:62px;height:18px;box-sizing:border-box;border:1px solid #000;background:#73f38f;text-align:center;line-height:16px;font-weight:bold">53</div><div style="left:204px;top:260px;width:62px;height:18px;box-sizing:border-box;border:1px solid #000;background:#75f497;text-align:center;line-height:16px;font-weight:bold">52</div><div style="left:266px;top:260px;width:62px;height:18px;box-sizing:border-box;border:1px solid #000;background:#7cf8b8;text-align:center;line-height:16px;font-weight:bold">48</div><div style="left:328px;top:260px;width:62px;height:18px;box-sizing:border-box;border:1px solid #000;background:#7ff9c8;text-align:center;line-height:16px;font-weight:bold">46</div><div style="left:390px;top:260px;width:62px;height:18px;box-sizing:border-box;border:1px solid #000;background:#81fad0;text-align:center;line-height:16px;font-weight:bold">45</div><div style="left:18px;top:278px;width:62px;height:18px;box-sizing:border-box;border:1px solid #000;background:#fff;text-align:center;line-height:16px;font-weight:bold">4800</div><div style="left:80px;top:278px;width:62px;height:18px;box-sizing:border-box;border:1px solid #000;background:#73f38f;text-align:center;line-height:16px;font-weight:bold">53</div><div style="left:142px;top:278px;width:62px;height:18px;box-sizing:border-box;border:1px solid #000;background:#6df16d;text-align:center;line-height:16px;font-weight:bold">57</div><div style="left:204px;top:278px;width:62px;height:18px;box-sizing:border-box;border:1px solid #000;background:#6ef175;text-align:center;line-height:16px;font-weight:bold">56</div><div style="left:266px;top:278px;width:62px;height:18px;box-sizing:border-box;border:1px solid #000;background:#71f386;text-align:center;line-height:16px;font-weight:bold">54</div><div style="left:328px;top:278px;width:62px;height:18px;box-sizing:border-box;border:1px solid #000;background:#75f497;text-align:center;line-height:16px;font-weight:bold">52</div><div style="left:390px;top:278px;width:62px;height:18px;box-sizing:border-box;border:1px solid #000;background:#78f6a8;text-align:center;line-height:16px;font-weight:bold">50</div><div style="left:18px;top:296px;width:62px;height:18px;box-sizing:border-box;border:1px solid #000;background:#fff;text-align:center;line-height:16px;font-weight:bold">5200</div><div style="left:80px;top:296px;width:62px;height:18px;box-sizing:border-box;border:1px solid #000;background:#6df16d;text-align:center;line-height:16px;font-weight:bold">57</div><div style="left:142px;top:296px;width:62px;height:18px;box-sizing:border-box;border:1px solid #000;background:#86f069;text-align:center;line-height:16px;font-weight:bold">61</div><div style="left:204px;top:296px;width:62px;height:18px;box-sizing:border-box;border:1px solid #000;background:#80f06a;text-align:center;line-height:16px;font-weight:bold">60</div><div style="left:266px;top:296px;width:62px;height:18px;box-sizing:border-box;border:1px solid #000;background:#6df16d;text-align:center;line-height:16px;font-weight:bold">57</div><div style="left:328px;top:296px;width:62px;height:18px;box-sizing:border-box;border:1px solid #000;background:#6ef175;text-align:center;line-height:16px;font-weight:bold">56</div><div style="left:390px;top:296px;width:62px;height:18px;box-sizing:border-box;border:1px solid #000;background:#75f497;text-align:center;line-height:16px;font-weight:bold">52</div><div style="left:18px;top:314px;width:62px;height:18px;box-sizing:border-box;border:1px solid #000;background:#fff;text-align:center;line-height:16px;font-weight:bold">5600</div><div style="left:80px;top:314px;width:62px;height:18px;box-sizing:border-box;border:1px solid #000;background:#86f069;text-align:center;line-height:16px;font-weight:bold">61</div><div style="left:142px;top:314px;width:62px;height:18px;box-sizing:border-box;border:1px solid #000;background:#abf268;text-align:center;line-height:16px;font-weight:bold">66</div><div style="left:204px;top:314px;width:62px;height:18px;box-sizing:border-box;border:1px solid #000;background:#a3f168;text-align:center;line-height:16px;font-weight:bold">65</div><div style="left:266px;top:314px;width:62px;height:18px;box-sizing:border-box;border:1px solid #000;background:#80f06a;text-align:center;line-height:16px;font-weight:bold">60</div><div style="left:328px;top:314px;width:62px;height:18px;box-sizing:border-box;border:1px solid #000;background:#73f06c;text-align:center;line-height:16px;font-weight:bold">58</div><div style="left:390px;top:314px;width:62px;height:18px;box-sizing:border-box;border:1px solid #000;background:#70f27e;text-align:center;line-height:16px;font-weight:bold">55</div><div style="left:18px;top:332px;width:62px;height:18px;box-sizing:border-box;border:1px solid #000;background:#fff;text-align:center;line-height:16px;font-weight:bold">6000</div><div style="left:80px;top:332px;width:62px;height:18px;box-sizing:border-box;border:1px solid #000;background:#a3f168;text-align:center;line-height:16px;font-weight:bold">65</div><div style="left:142px;top:332px;width:62px;height:18px;box-sizing:border-box;border:1px solid #000;background:#cbf56a;text-align:center;line-height:16px;font-weight:bold">70</div><div style="left:204px;top:332px;width:62px;height:18px;box-sizing:border-box;border:1px solid #000;background:#bbf369;text-align:center;line-height:16px;font-weight:bold">68</div><div style="left:266px;top:332px;width:62px;height:18px;box-sizing:border-box;border:1px solid #000;background:#9cf068;text-align:center;line-height:16px;font-weight:bold">64</div><div style="left:328px;top:332px;width:62px;height:18px;box-sizing:border-box;border:1px solid #000;background:#8df069;text-align:center;line-height:16px;font-weight:bold">62</div><div style="left:390px;top:332px;width:62px;height:18px;box-sizing:border-box;border:1px solid #000;background:#86f069;text-align:center;line-height:16px;font-weight:bold">61</div><div style="left:18px;top:350px;width:62px;height:18px;box-sizing:border-box;border:1px solid #000;background:#fff;text-align:center;line-height:16px;font-weight:bold">6400</div><div style="left:80px;top:350px;width:62px;height:18px;box-sizing:border-box;border:1px solid #000;background:#c3f469;text-align:center;line-height:16px;font-weight:bold">69</div><div style="left:142px;top:350px;width:62px;height:18px;box-sizing:border-box;border:1px solid #000;background:#edf86b;text-align:center;line-height:16px;font-weight:bold">74</div><div style="left:204px;top:350px;width:62px;height:18px;box-sizing:border-box;border:1px solid #000;background:#dcf66a;text-align:center;line-height:16px;font-weight:bold">72</div><div style="left:266px;top:350px;width:62px;height:18px;box-sizing:border-box;border:1px solid #000;background:#cbf56a;text-align:center;line-height:16px;font-weight:bold">70</div><div style="left:328px;top:350px;width:62px;height:18px;box-sizing:border-box;border:1px solid #000;background:#c3f469;text-align:center;line-height:16px;font-weight:bold">69</div><div style="left:390px;top:350px;width:62px;height:18px;box-sizing:border-box;border:1px solid #000;background:#cbf56a;text-align:center;line-height:16px;font-weight:bold">70</div><div style="left:18px;top:368px;width:62px;height:18px;box-sizing:border-box;border:1px solid #000;background:#fff;text-align:center;line-height:16px;font-weight:bold">6800</div><div style="left:80px;top:368px;width:62px;height:18px;box-sizing:border-box;border:1px solid #000;background:#e4f76b;text-align:center;line-height:16px;font-weight:bold">73</div><div style="left:142px;top:368px;width:62px;height:18px;box-sizing:border-box;border:1px solid #000;background:#fbe86c;text-align:center;line-height:16px;font-weight:bold">78</div><div style="left:204px;top:368px;width:62px;height:18px;box-sizing:border-box;border:1px solid #000;background:#fcd96c;text-align:center;line-height:16px;font-weight:bold">80</div><div style="left:266px;top:368px;width:62px;height:18px;box-sizing:border-box;border:1px solid #000;background:#fcd96c;text-align:center;line-height:16px;font-weight:bold">80</div><div style="left:328px;top:368px;width:62px;height:18px;box-sizing:border-box;border:1px solid #000;background:#fcd96c;text-align:center;line-height:16px;font-weight:bold">80</div><div style="left:390px;top:368px;width:62px;height:18px;box-sizing:border-box;border:1px solid #000;background:#feb26b;text-align:center;line-height:16px;font-weight:bold">85</div><div style="left:18px;top:386px;width:62px;height:18px;box-sizing:border-box;border:1px solid #000;background:#fff;text-align:center;line-height:16px;font-weight:bold">7200</div><div style="left:80px;top:386px;width:62px;height:18px;box-sizing:border-box;border:1px solid #000;background:#fce16c;text-align:center;line-height:16px;font-weight:bold">79</div><div style="left:142px;top:386px;width:62px;height:18px;box-sizing:border-box;border:1px solid #000;background:#feba6b;text-align:center;line-height:16px;font-weight:bold">84</div><div style="left:204px;top:386px;width:62px;height:18px;box-sizing:border-box;border:1px solid #000;background:#ff6f67;text-align:center;line-height:16px;font-weight:bold">93</div><div style="left:266px;top:386px;width:62px;height:18px;box-sizing:border-box;border:1px solid #000;background:#ff6666;text-align:center;line-height:16px;font-weight:bold">95</div><div style="left:328px;top:386px;width:62px;height:18px;box-sizing:border-box;border:1px solid #000;background:#ff8968;text-align:center;line-height:16px;font-weight:bold">90</div><div style="left:390px;top:386px;width:62px;height:18px;box-sizing:border-box;border:1px solid #000;background:#ff8968;text-align:center;line-height:16px;font-weight:bold">90</div><div style="left:18px;top:404px;width:62px;height:18px;box-sizing:border-box;border:1px solid #000;background:#fff;text-align:center;line-height:16px;font-weight:bold">7600</div><div style="left:80px;top:404px;width:62px;height:18px;box-sizing:border-box;border:1px solid #000;background:#fea26a;text-align:center;line-height:16px;font-weight:bold">87</div><div style="left:142px;top:404px;width:62px;height:18px;box-sizing:border-box;border:1px solid #000;background:#ff8068;text-align:center;line-height:16px;font-weight:bold">91</div><div style="left:204px;top:404px;width:62px;height:18px;box-sizing:border-box;border:1px solid #000;background:#ff6666;text-align:center;line-height:16px;font-weight:bold">95</div><div style="left:266px;top:404px;width:62px;height:18px;box-sizing:border-box;border:1px solid #000;background:#ff6666;text-align:center;line-height:16px;font-weight:bold">95</div><div style="left:328px;top:404px;width:62px;height:18px;box-sizing:border-box;border:1px solid #000;background:#ff6666;text-align:center;line-height:16px;font-weight:bold">95</div><div style="left:390px;top:404px;width:62px;height:18px;box-sizing:border-box;border:1px solid #000;background:#ff6666;text-align:center;line-height:16px;font-weight:bold">95</div><div style="left:18px;top:422px;width:62px;height:18px;box-sizing:border-box;border:1px solid #000;background:#fff;text-align:center;line-height:16px;font-weight:bold">8000</div><div style="left:80px;top:422px;width:62px;height:18px;box-sizing:border-box;border:1px solid #000;background:#ff6666;text-align:center;line-height:16px;font-weight:bold">95</div><div style="left:142px;top:422px;width:62px;height:18px;box-sizing:border-box;border:1px solid #000;background:#ff6666;text-align:center;line-height:16px;font-weight:bold">95</div><div style="left:204px;top:422px;width:62px;height:18px;box-sizing:border-box;border:1px solid #000;background:#ff6666;text-align:center;line-height:16px;font-weight:bold">95</div><div style="left:266px;top:422px;width:62px;height:18px;box-sizing:border-box;border:1px solid #000;background:#ff6666;text-align:center;line-height:16px;font-weight:bold">95</div><div style="left:328px;top:422px;width:62px;height:18px;box-sizing:border-box;border:1px solid #000;background:#ff6666;text-align:center;line-height:16px;font-weight:bold">95</div><div style="left:390px;top:422px;width:62px;height:18px;box-sizing:border-box;border:1px solid #000;background:#ff6666;text-align:center;line-height:16px;font-weight:bold">95</div><div style="left:18px;top:440px;width:62px;height:18px;box-sizing:border-box;border:1px solid #000;background:#fff;text-align:center;line-height:16px;font-weight:bold">8400</div><div style="left:80px;top:440px;width:62px;height:18px;box-sizing:border-box;border:1px solid #000;background:#ff6666;text-align:center;line-height:16px;font-weight:bold">95</div><div style="left:142px;top:440px;width:62px;height:18px;box-sizing:border-box;border:1px solid #000;background:#ff6666;text-align:center;line-height:16px;font-weight:bold">95</div><div style="left:204px;top:440px;width:62px;height:18px;box-sizing:border-box;border:1px solid #000;background:#ff6666;text-align:center;line-height:16px;font-weight:bold">95</div><div style="left:266px;top:440px;width:62px;height:18px;box-sizing:border-box;border:1px solid #000;background:#ff6666;text-align:center;line-height:16px;font-weight:bold">95</div><div style="left:328px;top:440px;width:62px;height:18px;box-sizing:border-box;border:1px solid #000;background:#ff6666;text-align:center;line-height:16px;font-weight:bold">95</div><div style="left:390px;top:440px;width:62px;height:18px;box-sizing:border-box;border:1px solid #000;background:#ff6666;text-align:center;line-height:16px;font-weight:bold">95</div><div style="left:18px;top:458px;width:62px;height:18px;box-sizing:border-box;border:1px solid #000;background:#fff;text-align:center;line-height:16px;font-weight:bold">8800</div><div style="left:80px;top:458px;width:62px;height:18px;box-sizing:border-box;border:1px solid #000;background:#ff6666;text-align:center;line-height:16px;font-weight:bold">95</div><div style="left:142px;top:458px;width:62px;height:18px;box-sizing:border-box;border:1px solid #000;background:#ff6666;text-align:center;line-height:16px;font-weight:bold">95</div><div style="left:204px;top:458px;width:62px;height:18px;box-sizing:border-box;border:1px solid #000;background:#ff6666;text-align:center;line-height:16px;font-weight:bold">95</div><div style="left:266px;top:458px;width:62px;height:18px;box-sizing:border-box;border:1px solid #000;background:#ff6666;text-align:center;line-height:16px;font-weight:bold">95</div><div style="left:328px;top:458px;width:62px;height:18px;box-sizing:border-box;border:1px solid #000;background:#ff6666;text-align:center;line-height:16px;font-weight:bold">95</div><div style="left:390px;top:458px;width:62px;height:18px;box-sizing:border-box;border:1px solid #000;background:#ff6666;text-align:center;line-height:16px;font-weight:bold">95</div><div style="left:18px;top:476px;width:62px;height:18px;box-sizing:border-box;border:1px solid #000;background:#fff;text-align:center;line-height:16px;font-weight:bold">9200</div><div style="left:80px;top:476px;width:62px;height:18px;box-sizing:border-box;border:1px solid #000;background:#ff6666;text-align:center;line-height:16px;font-weight:bold">95</div><div style="left:142px;top:476px;width:62px;height:18px;box-sizing:border-box;border:1px solid #000;background:#ff6666;text-align:center;line-height:16px;font-weight:bold">95</div><div style="left:204px;top:476px;width:62px;height:18px;box-sizing:border-box;border:1px solid #000;background:#ff6666;text-align:center;line-height:16px;font-weight:bold">95</div><div style="left:266px;top:476px;width:62px;height:18px;box-sizing:border-box;border:1px solid #000;background:#ff6666;text-align:center;line-height:16px;font-weight:bold">95</div><div style="left:328px;top:476px;width:62px;height:18px;box-sizing:border-box;border:1px solid #000;background:#ff6666;text-align:center;line-height:16px;font-weight:bold">95</div><div style="left:390px;top:476px;width:62px;height:18px;box-sizing:border-box;border:1px solid #000;background:#ff6666;text-align:center;line-height:16px;font-weight:bold">95</div><div style="left:18px;top:494px;width:62px;height:18px;box-sizing:border-box;border:1px solid #000;background:#fff;text-align:center;line-height:16px;font-weight:bold">9600</div><div style="left:80px;top:494px;width:62px;height:18px;box-sizing:border-box;border:1px solid #000;background:#ff6666;text-align:center;line-height:16px;font-weight:bold">95</div><div style="left:142px;top:494px;width:62px;height:18px;box-sizing:border-box;border:1px solid #000;background:#ff6666;text-align:center;line-height:16px;font-weight:bold">95</div><div style="left:204px;top:494px;width:62px;height:18px;box-sizing:border-box;border:1px solid #000;background:#ff6666;text-align:center;line-height:16px;font-weight:bold">95</div><div style="left:266px;top:494px;width:62px;height:18px;box-sizing:border-box;border:1px solid #000;background:#ff6666;text-align:center;line-height:16px;font-weight:bold">95</div><div style="left:328px;top:494px;width:62px;height:18px;box-sizing:border-box;border:1px solid #000;background:#ff6666;text-align:center;line-height:16px;font-weight:bold">95</div><div style="left:390px;top:494px;width:62px;height:18px;box-sizing:border-box;border:1px solid #000;background:#ff6666;text-align:center;line-height:16px;font-weight:bold">95</div><div style="left:18px;top:512px;width:62px;height:18px;box-sizing:border-box;border:1px solid #000;background:#fff;text-align:center;line-height:16px;font-weight:bold">10000</div><div style="left:80px;top:512px;width:62px;height:18px;box-sizing:border-box;border:1px solid #000;background:#ff6666;text-align:center;line-height:16px;font-weight:bold">95</div><div style="left:142px;top:512px;width:62px;height:18px;box-sizing:border-box;border:1px solid #000;background:#ff6666;text-align:center;line-height:16px;font-weight:bold">95</div><div style="left:204px;top:512px;width:62px;height:18px;box-sizing:border-box;border:1px solid #000;background:#ff6666;text-align:center;line-height:16px;font-weight:bold">95</div><div style="left:266px;top:512px;width:62px;height:18px;box-sizing:border-box;border:1px solid #000;background:#ff6666;text-align:center;line-height:16px;font-weight:bold">95</div><div style="left:328px;top:512px;width:62px;height:18px;box-sizing:border-box;border:1px solid #000;background:#ff6666;text-align:center;line-height:16px;font-weight:bold">95</div><div style="left:390px;top:512px;width:62px;height:18px;box-sizing:border-box;border:1px solid #000;background:#ff6666;text-align:center;line-height:16px;font-weight:bold">95</div><div style="left:18px;top:530px;width:62px;height:18px;box-sizing:border-box;border:1px solid #000;background:#fff;text-align:center;line-height:16px;font-weight:bold">10400</div><div style="left:80px;top:530px;width:62px;height:18px;box-sizing:border-box;border:1px solid #000;background:#ff6666;text-align:center;line-height:16px;font-weight:bold">95</div><div style="left:142px;top:530px;width:62px;height:18px;box-sizing:border-box;border:1px solid #000;background:#ff6666;text-align:center;line-height:16px;font-weight:bold">95</div><div style="left:204px;top:530px;width:62px;height:18px;box-sizing:border-box;border:1px solid #000;background:#ff6666;text-align:center;line-height:16px;font-weight:bold">95</div><div style="left:266px;top:530px;width:62px;height:18px;box-sizing:border-box;border:1px solid #000;background:#ff6666;text-align:center;line-height:16px;font-weight:bold">95</div><div style="left:328px;top:530px;width:62px;height:18px;box-sizing:border-box;border:1px solid #000;background:#ff6666;text-align:center;line-height:16px;font-weight:bold">95</div><div style="left:390px;top:530px;width:62px;height:18px;box-sizing:border-box;border:1px solid #000;background:#ff6666;text-align:center;line-height:16px;font-weight:bold">95</div><div style="left:18px;top:548px;width:62px;height:18px;box-sizing:border-box;border:1px solid #000;background:#fff;text-align:center;line-height:16px;font-weight:bold">10800</div><div style="left:80px;top:548px;width:62px;height:18px;box-sizing:border-box;border:1px solid #000;background:#ff6666;text-align:center;line-height:16px;font-weight:bold">95</div><div style="left:142px;top:548px;width:62px;height:18px;box-sizing:border-box;border:1px solid #000;background:#ff6666;text-align:center;line-height:16px;font-weight:bold">95</div><div style="left:204px;top:548px;width:62px;height:18px;box-sizing:border-box;border:1px solid #000;background:#ff6666;text-align:center;line-height:16px;font-weight:bold">95</div><div style="left:266px;top:548px;width:62px;height:18px;box-sizing:border-box;border:1px solid #000;background:#ff6666;text-align:center;line-height:16px;font-weight:bold">95</div><div style="left:328px;top:548px;width:62px;height:18px;box-sizing:border-box;border:1px solid #000;background:#ff6666;text-align:center;line-height:16px;font-weight:bold">95</div><div style="left:390px;top:548px;width:62px;height:18px;box-sizing:border-box;border:1px solid #000;background:#ff6666;text-align:center;line-height:16px;font-weight:bold">95</div><div style="left:18px;top:566px;width:62px;height:18px;box-sizing:border-box;border:1px solid #000;background:#fff;text-align:center;line-height:16px;font-weight:bold">11200</div><div style="left:80px;top:566px;width:62px;height:18px;box-sizing:border-box;border:1px solid #000;background:#ff6666;text-align:center;line-height:16px;font-weight:bold">95</div><div style="left:142px;top:566px;width:62px;height:18px;box-sizing:border-box;border:1px solid #000;background:#ff6666;text-align:center;line-height:16px;font-weight:bold">95</div><div style="left:204px;top:566px;width:62px;height:18px;box-sizing:border-box;border:1px solid #000;background:#ff6666;text-align:center;line-height:16px;font-weight:bold">95</div><div style="left:266px;top:566px;width:62px;height:18px;box-sizing:border-box;border:1px solid #000;background:#ff6666;text-align:center;line-height:16px;font-weight:bold">95</div><div style="left:328px;top:566px;width:62px;height:18px;box-sizing:border-box;border:1px solid #000;background:#ff6666;text-align:center;line-height:16px;font-weight:bold">95</div><div style="left:390px;top:566px;width:62px;height:18px;box-sizing:border-box;border:1px solid #000;background:#ff6666;text-align:center;line-height:16px;font-weight:bold">95</div><div style="left:18px;top:584px;width:62px;height:18px;box-sizing:border-box;border:1px solid #000;background:#fff;text-align:center;line-height:16px;font-weight:bold">11600</div><div style="left:80px;top:584px;width:62px;height:18px;box-sizing:border-box;border:1px solid #000;background:#ff6666;text-align:center;line-height:16px;font-weight:bold">95</div><div style="left:142px;top:584px;width:62px;height:18px;box-sizing:border-box;border:1px solid #000;background:#ff6666;text-align:center;line-height:16px;font-weight:bold">95</div><div style="left:204px;top:584px;width:62px;height:18px;box-sizing:border-box;border:1px solid #000;background:#ff6666;text-align:center;line-height:16px;font-weight:bold">95</div><div style="left:266px;top:584px;width:62px;height:18px;box-sizing:border-box;border:1px solid #000;background:#ff6666;text-align:center;line-height:16px;font-weight:bold">95</div><div style="left:328px;top:584px;width:62px;height:18px;box-sizing:border-box;border:1px solid #000;background:#ff6666;text-align:center;line-height:16px;font-weight:bold">95</div><div style="left:390px;top:584px;width:62px;height:18px;box-sizing:border-box;border:1px solid #000;background:#ff6666;text-align:center;line-height:16px;font-weight:bold">95</div><div class="t" style="left:-50.5px;top:361px;width:120px;text-align:center;line-height:14px;transform:rotate(-90deg);letter-spacing:-0.25px">Engine Speed (rpm)</div><div class="t" style="left:0px;top:603px;width:456px;text-align:center;line-height:14px">STP Open</div></div>
<div style="left:437px;top:346px;width:456px;height:580px;overflow:hidden"><div style="left:0px;top:0px;width:456px;height:600px;background:#f0f0f0;overflow:hidden;box-sizing:border-box;border-left:1px solid #fafafa;border-right:2px solid #b4b4b4;border-bottom:2px solid #a8a8a8"></div><div style="left:0px;top:0px;width:456px;height:26px;background:linear-gradient(#dce8f4 0,#9cb9d8 8%,#b9d3ec 100%);border-radius:5px 5px 0 0;box-sizing:border-box;border:1px solid #55606c;border-bottom:none"></div><div class="t" style="left:24px;top:7px;font-size:12px;color:#1e2a3a;white-space:pre;letter-spacing:-0.38px;line-height:15px">32920-04K30.bin - Map. Gear 6</div><div style="left:424px;top:6px;width:28px;height:17px;box-sizing:border-box;border:1px solid #5a2018;border-radius:3px;background:linear-gradient(#eaa393 0,#d98573 45%,#c5513a 50%,#d46a4c)"><svg width="28" height="17" viewBox="0 0 28 17" style="position:absolute;left:-1px;top:-1px"><path d="M12 6.8 L19 11.8 M19 6.8 L12 11.8" stroke="#3a4450" stroke-width="4.6" stroke-linecap="round"/><path d="M12 6.8 L19 11.8 M19 6.8 L12 11.8" stroke="#fff" stroke-width="2.6" stroke-linecap="round"/></svg></div><div style="left:1px;top:26px;width:454px;height:20px;background:linear-gradient(#fafbfd 0,#f2f3f9 28%,#d5d9eb 34%,#dce0f2 100%);border-bottom:1px solid #a5a9b0"></div><div class="t" style="left:7px;top:29px;font-size:11.5px;line-height:15px;color:#10101a">Table</div><div class="t" style="left:43px;top:29px;font-size:11.5px;line-height:15px;color:#10101a">Edit</div><div class="t" style="left:72px;top:29px;font-size:11.5px;line-height:15px;color:#10101a">View</div><div style="left:13px;top:58px;width:33px;height:33px;box-sizing:border-box;border:1px solid #a8a8a8"><div style="left:1px;top:1px;width:29px;height:29px;box-sizing:border-box;border:1px solid #777;border-radius:3px;background:linear-gradient(#fafafa,#e6e6e6 60%,#d8d8d8)"></div><svg width="33" height="33" viewBox="0 0 33 33" style="position:absolute;left:0;top:0"><defs><linearGradient id="gbu_13_58" x1="0" y1="0" x2="0" y2="1"><stop offset="0" stop-color="#2f80d8"/><stop offset="1" stop-color="#0d4a9e"/></linearGradient><filter id="fgbu_13_58" x="-20%" y="-20%" width="150%" height="150%"><feGaussianBlur stdDeviation="1.2"/></filter></defs><path d="M16.5 5.5 L27.5 16.8 H20.4 V26.6 H12.4 V16.8 H5.3 Z" fill="#000" opacity=".6" transform="translate(1.5,2)" filter="url(#fgbu_13_58)"/><path d="M16.5 5.5 L27.5 16.8 H20.4 V26.6 H12.4 V16.8 H5.3 Z" fill="url(#gbu_13_58)" stroke="#071a3a" stroke-width="1.7" stroke-linejoin="round"/></svg></div><div style="left:51px;top:58px;width:33px;height:33px;box-sizing:border-box;border:1px solid #a8a8a8"><div style="left:1px;top:1px;width:29px;height:29px;box-sizing:border-box;border:1px solid #777;border-radius:3px;background:linear-gradient(#fafafa,#e6e6e6 60%,#d8d8d8)"></div><svg width="33" height="33" viewBox="0 0 33 33" style="position:absolute;left:0;top:0"><defs><linearGradient id="gbd_51_58" x1="0" y1="0" x2="0" y2="1"><stop offset="0" stop-color="#10489a"/><stop offset="1" stop-color="#3a90e4"/></linearGradient><filter id="fgbd_51_58" x="-20%" y="-20%" width="150%" height="150%"><feGaussianBlur stdDeviation="1.2"/></filter></defs><path d="M11.8 6.5 H19.7 V15.9 H26.3 L15.3 27.4 L4.3 15.9 H11.8 Z" fill="#000" opacity=".6" transform="translate(1.5,2)" filter="url(#fgbd_51_58)"/><path d="M11.8 6.5 H19.7 V15.9 H26.3 L15.3 27.4 L4.3 15.9 H11.8 Z" fill="url(#gbd_51_58)" stroke="#071a3a" stroke-width="1.7" stroke-linejoin="round"/></svg></div><div style="left:89px;top:63px;width:45px;height:23px;box-sizing:border-box;border:1px solid #a6a6a6;background:#fff"><div class="t" style="left:3px;top:0;line-height:21px">1</div></div><div style="left:149px;top:58px;width:33px;height:33px;box-sizing:border-box;border:1px solid #a8a8a8"><div style="left:1px;top:1px;width:29px;height:29px;box-sizing:border-box;border:1px solid #777;border-radius:3px;background:linear-gradient(#fafafa,#e6e6e6 60%,#d8d8d8)"></div><svg width="33" height="33" viewBox="0 0 33 33" style="position:absolute;left:0;top:0"><defs><linearGradient id="gou_149_58" x1="0" y1="0" x2="0" y2="1"><stop offset="0" stop-color="#ffc43a"/><stop offset="1" stop-color="#f08c00"/></linearGradient><filter id="fgou_149_58" x="-20%" y="-20%" width="150%" height="150%"><feGaussianBlur stdDeviation="1.2"/></filter></defs><path d="M13 6.5h4v3h3v3h3v3h3v3.5h-7v8h-8v-8h-7v-3.5h3v-3h3v-3h3z" fill="#000" opacity=".6" transform="translate(1.5,2)" filter="url(#fgou_149_58)"/><path d="M13 6.5h4v3h3v3h3v3h3v3.5h-7v8h-8v-8h-7v-3.5h3v-3h3v-3h3z" fill="url(#gou_149_58)" stroke="#2a1200" stroke-width="1.7" stroke-linejoin="round"/></svg></div><div style="left:187px;top:58px;width:33px;height:33px;box-sizing:border-box;border:1px solid #a8a8a8"><div style="left:1px;top:1px;width:29px;height:29px;box-sizing:border-box;border:1px solid #777;border-radius:3px;background:linear-gradient(#fafafa,#e6e6e6 60%,#d8d8d8)"></div><svg width="33" height="33" viewBox="0 0 33 33" style="position:absolute;left:0;top:0"><defs><linearGradient id="god_187_58" x1="0" y1="0" x2="0" y2="1"><stop offset="0" stop-color="#f59400"/><stop offset="1" stop-color="#ffc640"/></linearGradient><filter id="fgod_187_58" x="-20%" y="-20%" width="150%" height="150%"><feGaussianBlur stdDeviation="1.2"/></filter></defs><path d="M12 4h8v9.5h7v3h-3v3h-3v3h-3v3h-4v-3h-3v-3h-3v-3h-3v-3h7z" fill="#000" opacity=".6" transform="translate(1.5,2)" filter="url(#fgod_187_58)"/><path d="M12 4h8v9.5h7v3h-3v3h-3v3h-3v3h-4v-3h-3v-3h-3v-3h-3v-3h7z" fill="url(#god_187_58)" stroke="#2a1200" stroke-width="1.7" stroke-linejoin="round"/></svg></div><div style="left:225px;top:63px;width:45px;height:23px;box-sizing:border-box;border:1px solid #a6a6a6;background:#fff"><div class="t" style="left:3px;top:0;line-height:21px">10</div></div><div style="left:285px;top:63px;width:45px;height:23px;box-sizing:border-box;border:1px solid #a6a6a6;background:#fff"><div class="t" style="left:3px;top:0;line-height:21px"></div></div><div style="left:335px;top:63px;width:33px;height:23px;box-sizing:border-box;border:1px solid #a8a8a8"><div style="left:1px;top:1px;width:31px;height:21px;box-sizing:border-box;border:1px solid #707070;border-radius:3px;background:linear-gradient(#f6f6f6 0,#ebebeb 50%,#dddddd 51%,#cfcfcf)"></div><div class="t" style="left:0;top:0;width:33px;text-align:center;line-height:21px">Set</div></div><div style="left:373px;top:63px;width:33px;height:23px;box-sizing:border-box;border:1px solid #a8a8a8"><div style="left:1px;top:1px;width:31px;height:21px;box-sizing:border-box;border:1px solid #707070;border-radius:3px;background:linear-gradient(#f6f6f6 0,#ebebeb 50%,#dddddd 51%,#cfcfcf)"></div><div class="t" style="left:0;top:0;width:33px;text-align:center;line-height:21px">Mul</div></div><div style="left:416px;top:58px;width:33px;height:33px;box-sizing:border-box;border:1px solid #a0a0a0;overflow:hidden"><svg width="33" height="33" viewBox="0 0 33 33" style="position:absolute;left:-1px;top:-1px"><text x="2.6" y="24.6" font-family="Liberation Sans" font-weight="bold" font-size="22" textLength="30" lengthAdjust="spacingAndGlyphs" fill="#000" stroke="#000" stroke-width="1.4">3D</text><text x="1.2" y="22.4" font-family="Liberation Sans" font-weight="bold" font-size="22" textLength="30" lengthAdjust="spacingAndGlyphs" fill="#e0141c" stroke="#e0141c" stroke-width=".9">3D</text></svg></div><div class="t" style="left:0px;top:102px;width:456px;text-align:center;line-height:14px;letter-spacing:-0.2px">Map. Gear 6</div><div class="t" style="left:0px;top:116px;width:456px;text-align:center;line-height:14px;letter-spacing:-0.2px">TPS (%)</div><div style="left:80px;top:131px;width:62px;height:18px;box-sizing:border-box;border:1px solid #000;background:#fff;text-align:center;line-height:16px;font-weight:bold">0</div><div style="left:142px;top:131px;width:62px;height:18px;box-sizing:border-box;border:1px solid #000;background:#fff;text-align:center;line-height:16px;font-weight:bold">6,5</div><div style="left:204px;top:131px;width:62px;height:18px;box-sizing:border-box;border:1px solid #000;background:#fff;text-align:center;line-height:16px;font-weight:bold">19,6</div><div style="left:266px;top:131px;width:62px;height:18px;box-sizing:border-box;border:1px solid #000;background:#fff;text-align:center;line-height:16px;font-weight:bold">45,7</div><div style="left:328px;top:131px;width:62px;height:18px;box-sizing:border-box;border:1px solid #000;background:#fff;text-align:center;line-height:16px;font-weight:bold">54,3</div><div style="left:390px;top:131px;width:62px;height:18px;box-sizing:border-box;border:1px solid #000;background:#fff;text-align:center;line-height:16px;font-weight:bold">63</div><div style="left:18px;top:149px;width:62px;height:18px;box-sizing:border-box;border:1px solid #000;background:#fff;text-align:center;line-height:16px;font-weight:bold">2000</div><div style="left:80px;top:149px;width:62px;height:18px;box-sizing:border-box;border:1px solid #000;background:#95b2ff;text-align:center;line-height:16px;font-weight:bold">25</div><div style="left:142px;top:149px;width:62px;height:18px;box-sizing:border-box;border:1px solid #000;background:#95b2ff;text-align:center;line-height:16px;font-weight:bold">25</div><div style="left:204px;top:149px;width:62px;height:18px;box-sizing:border-box;border:1px solid #000;background:#9999ff;text-align:center;line-height:16px;font-weight:bold">20</div><div style="left:266px;top:149px;width:62px;height:18px;box-sizing:border-box;border:1px solid #000;background:#9999ff;text-align:center;line-height:16px;font-weight:bold">20</div><div style="left:328px;top:149px;width:62px;height:18px;box-sizing:border-box;border:1px solid #000;background:#9999ff;text-align:center;line-height:16px;font-weight:bold">20</div><div style="left:390px;top:149px;width:62px;height:18px;box-sizing:border-box;border:1px solid #000;background:#9999ff;text-align:center;line-height:16px;font-weight:bold">20</div><div style="left:18px;top:167px;width:62px;height:18px;box-sizing:border-box;border:1px solid #000;background:#fff;text-align:center;line-height:16px;font-weight:bold">2400</div><div style="left:80px;top:167px;width:62px;height:18px;box-sizing:border-box;border:1px solid #000;background:#91d2ff;text-align:center;line-height:16px;font-weight:bold">31</div><div style="left:142px;top:167px;width:62px;height:18px;box-sizing:border-box;border:1px solid #000;background:#8ee9fe;text-align:center;line-height:16px;font-weight:bold">35</div><div style="left:204px;top:167px;width:62px;height:18px;box-sizing:border-box;border:1px solid #000;background:#8fddff;text-align:center;line-height:16px;font-weight:bold">33</div><div style="left:266px;top:167px;width:62px;height:18px;box-sizing:border-box;border:1px solid #000;background:#92cdff;text-align:center;line-height:16px;font-weight:bold">30</div><div style="left:328px;top:167px;width:62px;height:18px;box-sizing:border-box;border:1px solid #000;background:#94bcff;text-align:center;line-height:16px;font-weight:bold">27</div><div style="left:390px;top:167px;width:62px;height:18px;box-sizing:border-box;border:1px solid #000;background:#95b2ff;text-align:center;line-height:16px;font-weight:bold">25</div><div style="left:18px;top:185px;width:62px;height:18px;box-sizing:border-box;border:1px solid #000;background:#fff;text-align:center;line-height:16px;font-weight:bold">2800</div><div style="left:80px;top:185px;width:62px;height:18px;box-sizing:border-box;border:1px solid #000;background:#8deffe;text-align:center;line-height:16px;font-weight:bold">36</div><div style="left:142px;top:185px;width:62px;height:18px;box-sizing:border-box;border:1px solid #000;background:#87fced;text-align:center;line-height:16px;font-weight:bold">41</div><div style="left:204px;top:185px;width:62px;height:18px;box-sizing:border-box;border:1px solid #000;background:#89fdfa;text-align:center;line-height:16px;font-weight:bold">39</div><div style="left:266px;top:185px;width:62px;height:18px;box-sizing:border-box;border:1px solid #000;background:#90d8ff;text-align:center;line-height:16px;font-weight:bold">32</div><div style="left:328px;top:185px;width:62px;height:18px;box-sizing:border-box;border:1px solid #000;background:#92cdff;text-align:center;line-height:16px;font-weight:bold">30</div><div style="left:390px;top:185px;width:62px;height:18px;box-sizing:border-box;border:1px solid #000;background:#92cdff;text-align:center;line-height:16px;font-weight:bold">30</div><div style="left:18px;top:203px;width:62px;height:18px;box-sizing:border-box;border:1px solid #000;background:#fff;text-align:center;line-height:16px;font-weight:bold">3200</div><div style="left:80px;top:203px;width:62px;height:18px;box-sizing:border-box;border:1px solid #000;background:#88fdf3;text-align:center;line-height:16px;font-weight:bold">40</div><div style="left:142px;top:203px;width:62px;height:18px;box-sizing:border-box;border:1px solid #000;background:#81fad0;text-align:center;line-height:16px;font-weight:bold">45</div><div style="left:204px;top:203px;width:62px;height:18px;box-sizing:border-box;border:1px solid #000;background:#84fbde;text-align:center;line-height:16px;font-weight:bold">43</div><div style="left:266px;top:203px;width:62px;height:18px;box-sizing:border-box;border:1px solid #000;background:#8fe3fe;text-align:center;line-height:16px;font-weight:bold">34</div><div style="left:328px;top:203px;width:62px;height:18px;box-sizing:border-box;border:1px solid #000;background:#90d8ff;text-align:center;line-height:16px;font-weight:bold">32</div><div style="left:390px;top:203px;width:62px;height:18px;box-sizing:border-box;border:1px solid #000;background:#90d8ff;text-align:center;line-height:16px;font-weight:bold">32</div><div style="left:18px;top:221px;width:62px;height:18px;box-sizing:border-box;border:1px solid #000;background:#fff;text-align:center;line-height:16px;font-weight:bold">3600</div><div style="left:80px;top:221px;width:62px;height:18px;box-sizing:border-box;border:1px solid #000;background:#84fbde;text-align:center;line-height:16px;font-weight:bold">43</div><div style="left:142px;top:221px;width:62px;height:18px;box-sizing:border-box;border:1px solid #000;background:#7cf8b8;text-align:center;line-height:16px;font-weight:bold">48</div><div style="left:204px;top:221px;width:62px;height:18px;box-sizing:border-box;border:1px solid #000;background:#7ff9c8;text-align:center;line-height:16px;font-weight:bold">46</div><div style="left:266px;top:221px;width:62px;height:18px;box-sizing:border-box;border:1px solid #000;background:#8cf5fe;text-align:center;line-height:16px;font-weight:bold">37</div><div style="left:328px;top:221px;width:62px;height:18px;box-sizing:border-box;border:1px solid #000;background:#8ee9fe;text-align:center;line-height:16px;font-weight:bold">35</div><div style="left:390px;top:221px;width:62px;height:18px;box-sizing:border-box;border:1px solid #000;background:#8ee9fe;text-align:center;line-height:16px;font-weight:bold">35</div><div style="left:18px;top:239px;width:62px;height:18px;box-sizing:border-box;border:1px solid #000;background:#fff;text-align:center;line-height:16px;font-weight:bold">4000</div><div style="left:80px;top:239px;width:62px;height:18px;box-sizing:border-box;border:1px solid #000;background:#7ff9c8;text-align:center;line-height:16px;font-weight:bold">46</div><div style="left:142px;top:239px;width:62px;height:18px;box-sizing:border-box;border:1px solid #000;background:#78f6a8;text-align:center;line-height:16px;font-weight:bold">50</div><div style="left:204px;top:239px;width:62px;height:18px;box-sizing:border-box;border:1px solid #000;background:#7af7b0;text-align:center;line-height:16px;font-weight:bold">49</div><div style="left:266px;top:239px;width:62px;height:18px;box-sizing:border-box;border:1px solid #000;background:#87fced;text-align:center;line-height:16px;font-weight:bold">41</div><div style="left:328px;top:239px;width:62px;height:18px;box-sizing:border-box;border:1px solid #000;background:#89fdfa;text-align:center;line-height:16px;font-weight:bold">39</div><div style="left:390px;top:239px;width:62px;height:18px;box-sizing:border-box;border:1px solid #000;background:#88fdf3;text-align:center;line-height:16px;font-weight:bold">40</div><div style="left:18px;top:257px;width:62px;height:18px;box-sizing:border-box;border:1px solid #000;background:#fff;text-align:center;line-height:16px;font-weight:bold">4400</div><div style="left:80px;top:257px;width:62px;height:18px;box-sizing:border-box;border:1px solid #000;background:#7af7b0;text-align:center;line-height:16px;font-weight:bold">49</div><div style="left:142px;top:257px;width:62px;height:18px;box-sizing:border-box;border:1px solid #000;background:#73f38f;text-align:center;line-height:16px;font-weight:bold">53</div><div style="left:204px;top:257px;width:62px;height:18px;box-sizing:border-box;border:1px solid #000;background:#75f497;text-align:center;line-height:16px;font-weight:bold">52</div><div style="left:266px;top:257px;width:62px;height:18px;box-sizing:border-box;border:1px solid #000;background:#7cf8b8;text-align:center;line-height:16px;font-weight:bold">48</div><div style="left:328px;top:257px;width:62px;height:18px;box-sizing:border-box;border:1px solid #000;background:#7ff9c8;text-align:center;line-height:16px;font-weight:bold">46</div><div style="left:390px;top:257px;width:62px;height:18px;box-sizing:border-box;border:1px solid #000;background:#81fad0;text-align:center;line-height:16px;font-weight:bold">45</div><div style="left:18px;top:275px;width:62px;height:18px;box-sizing:border-box;border:1px solid #000;background:#fff;text-align:center;line-height:16px;font-weight:bold">4800</div><div style="left:80px;top:275px;width:62px;height:18px;box-sizing:border-box;border:1px solid #000;background:#73f38f;text-align:center;line-height:16px;font-weight:bold">53</div><div style="left:142px;top:275px;width:62px;height:18px;box-sizing:border-box;border:1px solid #000;background:#6df16d;text-align:center;line-height:16px;font-weight:bold">57</div><div style="left:204px;top:275px;width:62px;height:18px;box-sizing:border-box;border:1px solid #000;background:#6ef175;text-align:center;line-height:16px;font-weight:bold">56</div><div style="left:266px;top:275px;width:62px;height:18px;box-sizing:border-box;border:1px solid #000;background:#71f386;text-align:center;line-height:16px;font-weight:bold">54</div><div style="left:328px;top:275px;width:62px;height:18px;box-sizing:border-box;border:1px solid #000;background:#75f497;text-align:center;line-height:16px;font-weight:bold">52</div><div style="left:390px;top:275px;width:62px;height:18px;box-sizing:border-box;border:1px solid #000;background:#78f6a8;text-align:center;line-height:16px;font-weight:bold">50</div><div style="left:18px;top:293px;width:62px;height:18px;box-sizing:border-box;border:1px solid #000;background:#fff;text-align:center;line-height:16px;font-weight:bold">5200</div><div style="left:80px;top:293px;width:62px;height:18px;box-sizing:border-box;border:1px solid #000;background:#6df16d;text-align:center;line-height:16px;font-weight:bold">57</div><div style="left:142px;top:293px;width:62px;height:18px;box-sizing:border-box;border:1px solid #000;background:#86f069;text-align:center;line-height:16px;font-weight:bold">61</div><div style="left:204px;top:293px;width:62px;height:18px;box-sizing:border-box;border:1px solid #000;background:#80f06a;text-align:center;line-height:16px;font-weight:bold">60</div><div style="left:266px;top:293px;width:62px;height:18px;box-sizing:border-box;border:1px solid #000;background:#6df16d;text-align:center;line-height:16px;font-weight:bold">57</div><div style="left:328px;top:293px;width:62px;height:18px;box-sizing:border-box;border:1px solid #000;background:#6ef175;text-align:center;line-height:16px;font-weight:bold">56</div><div style="left:390px;top:293px;width:62px;height:18px;box-sizing:border-box;border:1px solid #000;background:#75f497;text-align:center;line-height:16px;font-weight:bold">52</div><div style="left:18px;top:311px;width:62px;height:18px;box-sizing:border-box;border:1px solid #000;background:#fff;text-align:center;line-height:16px;font-weight:bold">5600</div><div style="left:80px;top:311px;width:62px;height:18px;box-sizing:border-box;border:1px solid #000;background:#86f069;text-align:center;line-height:16px;font-weight:bold">61</div><div style="left:142px;top:311px;width:62px;height:18px;box-sizing:border-box;border:1px solid #000;background:#abf268;text-align:center;line-height:16px;font-weight:bold">66</div><div style="left:204px;top:311px;width:62px;height:18px;box-sizing:border-box;border:1px solid #000;background:#a3f168;text-align:center;line-height:16px;font-weight:bold">65</div><div style="left:266px;top:311px;width:62px;height:18px;box-sizing:border-box;border:1px solid #000;background:#80f06a;text-align:center;line-height:16px;font-weight:bold">60</div><div style="left:328px;top:311px;width:62px;height:18px;box-sizing:border-box;border:1px solid #000;background:#73f06c;text-align:center;line-height:16px;font-weight:bold">58</div><div style="left:390px;top:311px;width:62px;height:18px;box-sizing:border-box;border:1px solid #000;background:#70f27e;text-align:center;line-height:16px;font-weight:bold">55</div><div style="left:18px;top:329px;width:62px;height:18px;box-sizing:border-box;border:1px solid #000;background:#fff;text-align:center;line-height:16px;font-weight:bold">6000</div><div style="left:80px;top:329px;width:62px;height:18px;box-sizing:border-box;border:1px solid #000;background:#a3f168;text-align:center;line-height:16px;font-weight:bold">65</div><div style="left:142px;top:329px;width:62px;height:18px;box-sizing:border-box;border:1px solid #000;background:#cbf56a;text-align:center;line-height:16px;font-weight:bold">70</div><div style="left:204px;top:329px;width:62px;height:18px;box-sizing:border-box;border:1px solid #000;background:#bbf369;text-align:center;line-height:16px;font-weight:bold">68</div><div style="left:266px;top:329px;width:62px;height:18px;box-sizing:border-box;border:1px solid #000;background:#9cf068;text-align:center;line-height:16px;font-weight:bold">64</div><div style="left:328px;top:329px;width:62px;height:18px;box-sizing:border-box;border:1px solid #000;background:#8df069;text-align:center;line-height:16px;font-weight:bold">62</div><div style="left:390px;top:329px;width:62px;height:18px;box-sizing:border-box;border:1px solid #000;background:#86f069;text-align:center;line-height:16px;font-weight:bold">61</div><div style="left:18px;top:347px;width:62px;height:18px;box-sizing:border-box;border:1px solid #000;background:#fff;text-align:center;line-height:16px;font-weight:bold">6400</div><div style="left:80px;top:347px;width:62px;height:18px;box-sizing:border-box;border:1px solid #000;background:#c3f469;text-align:center;line-height:16px;font-weight:bold">69</div><div style="left:142px;top:347px;width:62px;height:18px;box-sizing:border-box;border:1px solid #000;background:#edf86b;text-align:center;line-height:16px;font-weight:bold">74</div><div style="left:204px;top:347px;width:62px;height:18px;box-sizing:border-box;border:1px solid #000;background:#dcf66a;text-align:center;line-height:16px;font-weight:bold">72</div><div style="left:266px;top:347px;width:62px;height:18px;box-sizing:border-box;border:1px solid #000;background:#cbf56a;text-align:center;line-height:16px;font-weight:bold">70</div><div style="left:328px;top:347px;width:62px;height:18px;box-sizing:border-box;border:1px solid #000;background:#c3f469;text-align:center;line-height:16px;font-weight:bold">69</div><div style="left:390px;top:347px;width:62px;height:18px;box-sizing:border-box;border:1px solid #000;background:#cbf56a;text-align:center;line-height:16px;font-weight:bold">70</div><div style="left:18px;top:365px;width:62px;height:18px;box-sizing:border-box;border:1px solid #000;background:#fff;text-align:center;line-height:16px;font-weight:bold">6800</div><div style="left:80px;top:365px;width:62px;height:18px;box-sizing:border-box;border:1px solid #000;background:#e4f76b;text-align:center;line-height:16px;font-weight:bold">73</div><div style="left:142px;top:365px;width:62px;height:18px;box-sizing:border-box;border:1px solid #000;background:#fbe86c;text-align:center;line-height:16px;font-weight:bold">78</div><div style="left:204px;top:365px;width:62px;height:18px;box-sizing:border-box;border:1px solid #000;background:#fcd96c;text-align:center;line-height:16px;font-weight:bold">80</div><div style="left:266px;top:365px;width:62px;height:18px;box-sizing:border-box;border:1px solid #000;background:#fcd96c;text-align:center;line-height:16px;font-weight:bold">80</div><div style="left:328px;top:365px;width:62px;height:18px;box-sizing:border-box;border:1px solid #000;background:#fcd96c;text-align:center;line-height:16px;font-weight:bold">80</div><div style="left:390px;top:365px;width:62px;height:18px;box-sizing:border-box;border:1px solid #000;background:#feb26b;text-align:center;line-height:16px;font-weight:bold">85</div><div style="left:18px;top:383px;width:62px;height:18px;box-sizing:border-box;border:1px solid #000;background:#fff;text-align:center;line-height:16px;font-weight:bold">7200</div><div style="left:80px;top:383px;width:62px;height:18px;box-sizing:border-box;border:1px solid #000;background:#fce16c;text-align:center;line-height:16px;font-weight:bold">79</div><div style="left:142px;top:383px;width:62px;height:18px;box-sizing:border-box;border:1px solid #000;background:#feba6b;text-align:center;line-height:16px;font-weight:bold">84</div><div style="left:204px;top:383px;width:62px;height:18px;box-sizing:border-box;border:1px solid #000;background:#ff6f67;text-align:center;line-height:16px;font-weight:bold">93</div><div style="left:266px;top:383px;width:62px;height:18px;box-sizing:border-box;border:1px solid #000;background:#ff6666;text-align:center;line-height:16px;font-weight:bold">95</div><div style="left:328px;top:383px;width:62px;height:18px;box-sizing:border-box;border:1px solid #000;background:#ff8968;text-align:center;line-height:16px;font-weight:bold">90</div><div style="left:390px;top:383px;width:62px;height:18px;box-sizing:border-box;border:1px solid #000;background:#ff8968;text-align:center;line-height:16px;font-weight:bold">90</div><div style="left:18px;top:401px;width:62px;height:18px;box-sizing:border-box;border:1px solid #000;background:#fff;text-align:center;line-height:16px;font-weight:bold">7600</div><div style="left:80px;top:401px;width:62px;height:18px;box-sizing:border-box;border:1px solid #000;background:#fea26a;text-align:center;line-height:16px;font-weight:bold">87</div><div style="left:142px;top:401px;width:62px;height:18px;box-sizing:border-box;border:1px solid #000;background:#ff8068;text-align:center;line-height:16px;font-weight:bold">91</div><div style="left:204px;top:401px;width:62px;height:18px;box-sizing:border-box;border:1px solid #000;background:#ff6666;text-align:center;line-height:16px;font-weight:bold">95</div><div style="left:266px;top:401px;width:62px;height:18px;box-sizing:border-box;border:1px solid #000;background:#ff6666;text-align:center;line-height:16px;font-weight:bold">95</div><div style="left:328px;top:401px;width:62px;height:18px;box-sizing:border-box;border:1px solid #000;background:#ff6666;text-align:center;line-height:16px;font-weight:bold">95</div><div style="left:390px;top:401px;width:62px;height:18px;box-sizing:border-box;border:1px solid #000;background:#ff6666;text-align:center;line-height:16px;font-weight:bold">95</div><div style="left:18px;top:419px;width:62px;height:18px;box-sizing:border-box;border:1px solid #000;background:#fff;text-align:center;line-height:16px;font-weight:bold">8000</div><div style="left:80px;top:419px;width:62px;height:18px;box-sizing:border-box;border:1px solid #000;background:#ff6666;text-align:center;line-height:16px;font-weight:bold">95</div><div style="left:142px;top:419px;width:62px;height:18px;box-sizing:border-box;border:1px solid #000;background:#ff6666;text-align:center;line-height:16px;font-weight:bold">95</div><div style="left:204px;top:419px;width:62px;height:18px;box-sizing:border-box;border:1px solid #000;background:#ff6666;text-align:center;line-height:16px;font-weight:bold">95</div><div style="left:266px;top:419px;width:62px;height:18px;box-sizing:border-box;border:1px solid #000;background:#ff6666;text-align:center;line-height:16px;font-weight:bold">95</div><div style="left:328px;top:419px;width:62px;height:18px;box-sizing:border-box;border:1px solid #000;background:#ff6666;text-align:center;line-height:16px;font-weight:bold">95</div><div style="left:390px;top:419px;width:62px;height:18px;box-sizing:border-box;border:1px solid #000;background:#ff6666;text-align:center;line-height:16px;font-weight:bold">95</div><div style="left:18px;top:437px;width:62px;height:18px;box-sizing:border-box;border:1px solid #000;background:#fff;text-align:center;line-height:16px;font-weight:bold">8400</div><div style="left:80px;top:437px;width:62px;height:18px;box-sizing:border-box;border:1px solid #000;background:#ff6666;text-align:center;line-height:16px;font-weight:bold">95</div><div style="left:142px;top:437px;width:62px;height:18px;box-sizing:border-box;border:1px solid #000;background:#ff6666;text-align:center;line-height:16px;font-weight:bold">95</div><div style="left:204px;top:437px;width:62px;height:18px;box-sizing:border-box;border:1px solid #000;background:#ff6666;text-align:center;line-height:16px;font-weight:bold">95</div><div style="left:266px;top:437px;width:62px;height:18px;box-sizing:border-box;border:1px solid #000;background:#ff6666;text-align:center;line-height:16px;font-weight:bold">95</div><div style="left:328px;top:437px;width:62px;height:18px;box-sizing:border-box;border:1px solid #000;background:#ff6666;text-align:center;line-height:16px;font-weight:bold">95</div><div style="left:390px;top:437px;width:62px;height:18px;box-sizing:border-box;border:1px solid #000;background:#ff6666;text-align:center;line-height:16px;font-weight:bold">95</div><div style="left:18px;top:455px;width:62px;height:18px;box-sizing:border-box;border:1px solid #000;background:#fff;text-align:center;line-height:16px;font-weight:bold">8800</div><div style="left:80px;top:455px;width:62px;height:18px;box-sizing:border-box;border:1px solid #000;background:#ff6666;text-align:center;line-height:16px;font-weight:bold">95</div><div style="left:142px;top:455px;width:62px;height:18px;box-sizing:border-box;border:1px solid #000;background:#ff6666;text-align:center;line-height:16px;font-weight:bold">95</div><div style="left:204px;top:455px;width:62px;height:18px;box-sizing:border-box;border:1px solid #000;background:#ff6666;text-align:center;line-height:16px;font-weight:bold">95</div><div style="left:266px;top:455px;width:62px;height:18px;box-sizing:border-box;border:1px solid #000;background:#ff6666;text-align:center;line-height:16px;font-weight:bold">95</div><div style="left:328px;top:455px;width:62px;height:18px;box-sizing:border-box;border:1px solid #000;background:#ff6666;text-align:center;line-height:16px;font-weight:bold">95</div><div style="left:390px;top:455px;width:62px;height:18px;box-sizing:border-box;border:1px solid #000;background:#ff6666;text-align:center;line-height:16px;font-weight:bold">95</div><div style="left:18px;top:473px;width:62px;height:18px;box-sizing:border-box;border:1px solid #000;background:#fff;text-align:center;line-height:16px;font-weight:bold">9200</div><div style="left:80px;top:473px;width:62px;height:18px;box-sizing:border-box;border:1px solid #000;background:#ff6666;text-align:center;line-height:16px;font-weight:bold">95</div><div style="left:142px;top:473px;width:62px;height:18px;box-sizing:border-box;border:1px solid #000;background:#ff6666;text-align:center;line-height:16px;font-weight:bold">95</div><div style="left:204px;top:473px;width:62px;height:18px;box-sizing:border-box;border:1px solid #000;background:#ff6666;text-align:center;line-height:16px;font-weight:bold">95</div><div style="left:266px;top:473px;width:62px;height:18px;box-sizing:border-box;border:1px solid #000;background:#ff6666;text-align:center;line-height:16px;font-weight:bold">95</div><div style="left:328px;top:473px;width:62px;height:18px;box-sizing:border-box;border:1px solid #000;background:#ff6666;text-align:center;line-height:16px;font-weight:bold">95</div><div style="left:390px;top:473px;width:62px;height:18px;box-sizing:border-box;border:1px solid #000;background:#ff6666;text-align:center;line-height:16px;font-weight:bold">95</div><div style="left:18px;top:491px;width:62px;height:18px;box-sizing:border-box;border:1px solid #000;background:#fff;text-align:center;line-height:16px;font-weight:bold">9600</div><div style="left:80px;top:491px;width:62px;height:18px;box-sizing:border-box;border:1px solid #000;background:#ff6666;text-align:center;line-height:16px;font-weight:bold">95</div><div style="left:142px;top:491px;width:62px;height:18px;box-sizing:border-box;border:1px solid #000;background:#ff6666;text-align:center;line-height:16px;font-weight:bold">95</div><div style="left:204px;top:491px;width:62px;height:18px;box-sizing:border-box;border:1px solid #000;background:#ff6666;text-align:center;line-height:16px;font-weight:bold">95</div><div style="left:266px;top:491px;width:62px;height:18px;box-sizing:border-box;border:1px solid #000;background:#ff6666;text-align:center;line-height:16px;font-weight:bold">95</div><div style="left:328px;top:491px;width:62px;height:18px;box-sizing:border-box;border:1px solid #000;background:#ff6666;text-align:center;line-height:16px;font-weight:bold">95</div><div style="left:390px;top:491px;width:62px;height:18px;box-sizing:border-box;border:1px solid #000;background:#ff6666;text-align:center;line-height:16px;font-weight:bold">95</div><div style="left:18px;top:509px;width:62px;height:18px;box-sizing:border-box;border:1px solid #000;background:#fff;text-align:center;line-height:16px;font-weight:bold">10000</div><div style="left:80px;top:509px;width:62px;height:18px;box-sizing:border-box;border:1px solid #000;background:#ff6666;text-align:center;line-height:16px;font-weight:bold">95</div><div style="left:142px;top:509px;width:62px;height:18px;box-sizing:border-box;border:1px solid #000;background:#ff6666;text-align:center;line-height:16px;font-weight:bold">95</div><div style="left:204px;top:509px;width:62px;height:18px;box-sizing:border-box;border:1px solid #000;background:#ff6666;text-align:center;line-height:16px;font-weight:bold">95</div><div style="left:266px;top:509px;width:62px;height:18px;box-sizing:border-box;border:1px solid #000;background:#ff6666;text-align:center;line-height:16px;font-weight:bold">95</div><div style="left:328px;top:509px;width:62px;height:18px;box-sizing:border-box;border:1px solid #000;background:#ff6666;text-align:center;line-height:16px;font-weight:bold">95</div><div style="left:390px;top:509px;width:62px;height:18px;box-sizing:border-box;border:1px solid #000;background:#ff6666;text-align:center;line-height:16px;font-weight:bold">95</div><div style="left:18px;top:527px;width:62px;height:18px;box-sizing:border-box;border:1px solid #000;background:#fff;text-align:center;line-height:16px;font-weight:bold">10400</div><div style="left:80px;top:527px;width:62px;height:18px;box-sizing:border-box;border:1px solid #000;background:#ff6666;text-align:center;line-height:16px;font-weight:bold">95</div><div style="left:142px;top:527px;width:62px;height:18px;box-sizing:border-box;border:1px solid #000;background:#ff6666;text-align:center;line-height:16px;font-weight:bold">95</div><div style="left:204px;top:527px;width:62px;height:18px;box-sizing:border-box;border:1px solid #000;background:#ff6666;text-align:center;line-height:16px;font-weight:bold">95</div><div style="left:266px;top:527px;width:62px;height:18px;box-sizing:border-box;border:1px solid #000;background:#ff6666;text-align:center;line-height:16px;font-weight:bold">95</div><div style="left:328px;top:527px;width:62px;height:18px;box-sizing:border-box;border:1px solid #000;background:#ff6666;text-align:center;line-height:16px;font-weight:bold">95</div><div style="left:390px;top:527px;width:62px;height:18px;box-sizing:border-box;border:1px solid #000;background:#ff6666;text-align:center;line-height:16px;font-weight:bold">95</div><div style="left:18px;top:545px;width:62px;height:18px;box-sizing:border-box;border:1px solid #000;background:#fff;text-align:center;line-height:16px;font-weight:bold">10750</div><div style="left:80px;top:545px;width:62px;height:18px;box-sizing:border-box;border:1px solid #000;background:#ff6666;text-align:center;line-height:16px;font-weight:bold">95</div><div style="left:142px;top:545px;width:62px;height:18px;box-sizing:border-box;border:1px solid #000;background:#ff6666;text-align:center;line-height:16px;font-weight:bold">95</div><div style="left:204px;top:545px;width:62px;height:18px;box-sizing:border-box;border:1px solid #000;background:#ff6666;text-align:center;line-height:16px;font-weight:bold">95</div><div style="left:266px;top:545px;width:62px;height:18px;box-sizing:border-box;border:1px solid #000;background:#ff6666;text-align:center;line-height:16px;font-weight:bold">95</div><div style="left:328px;top:545px;width:62px;height:18px;box-sizing:border-box;border:1px solid #000;background:#ff6666;text-align:center;line-height:16px;font-weight:bold">95</div><div style="left:390px;top:545px;width:62px;height:18px;box-sizing:border-box;border:1px solid #000;background:#ff6666;text-align:center;line-height:16px;font-weight:bold">95</div><div style="left:18px;top:563px;width:62px;height:18px;box-sizing:border-box;border:1px solid #000;background:#fff;text-align:center;line-height:16px;font-weight:bold">11150</div><div style="left:80px;top:563px;width:62px;height:18px;box-sizing:border-box;border:1px solid #000;background:#78f6a8;text-align:center;line-height:16px;font-weight:bold">50</div><div style="left:142px;top:563px;width:62px;height:18px;box-sizing:border-box;border:1px solid #000;background:#78f6a8;text-align:center;line-height:16px;font-weight:bold">50</div><div style="left:204px;top:563px;width:62px;height:18px;box-sizing:border-box;border:1px solid #000;background:#78f6a8;text-align:center;line-height:16px;font-weight:bold">50</div><div style="left:266px;top:563px;width:62px;height:18px;box-sizing:border-box;border:1px solid #000;background:#78f6a8;text-align:center;line-height:16px;font-weight:bold">50</div><div style="left:328px;top:563px;width:62px;height:18px;box-sizing:border-box;border:1px solid #000;background:#78f6a8;text-align:center;line-height:16px;font-weight:bold">50</div><div style="left:390px;top:563px;width:62px;height:18px;box-sizing:border-box;border:1px solid #000;background:#78f6a8;text-align:center;line-height:16px;font-weight:bold">50</div><div class="t" style="left:-50.5px;top:359px;width:120px;text-align:center;line-height:14px;transform:rotate(-90deg);letter-spacing:-0.25px">Engine Speed (rpm)</div></div>
</body></html>
